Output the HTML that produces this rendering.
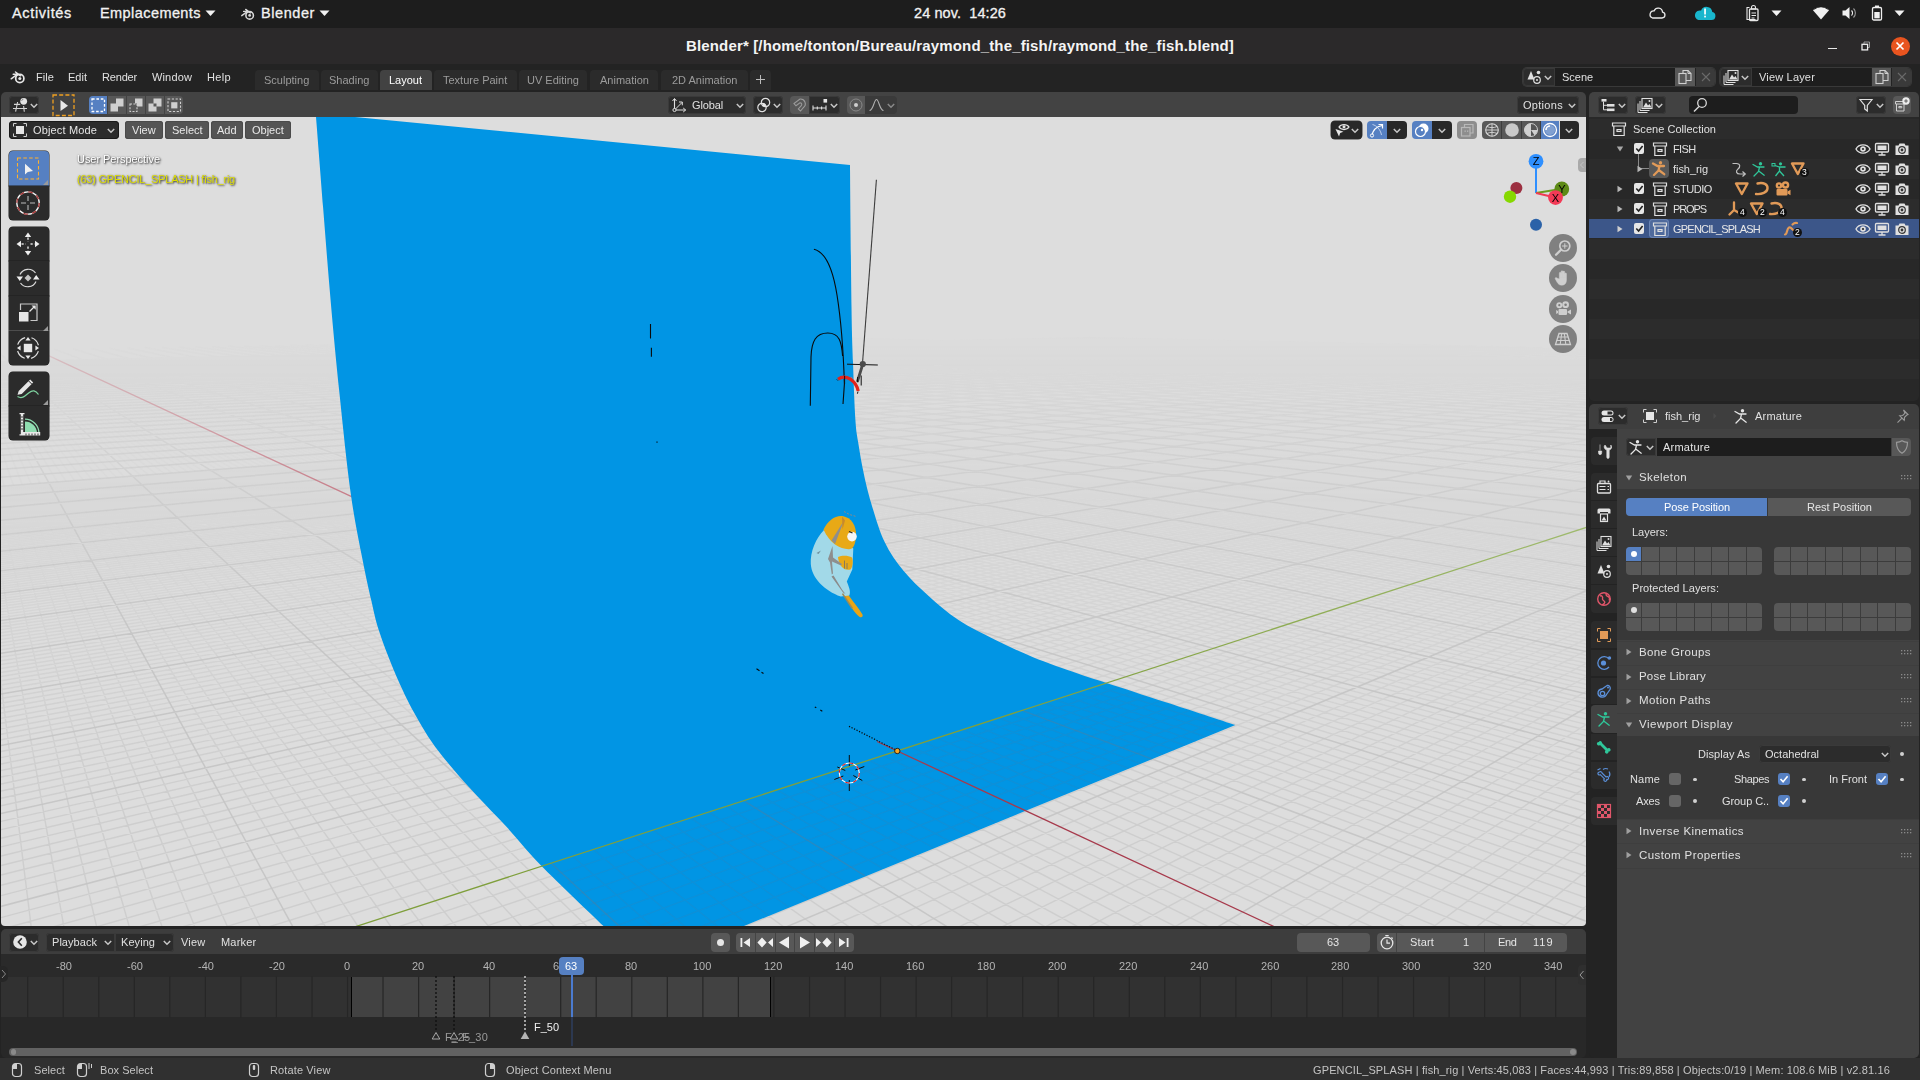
<!DOCTYPE html><html><head><meta charset="utf-8"><title>Blender</title><style>html,body{margin:0;padding:0;background:#232323;}
body{width:1920px;height:1080px;position:relative;overflow:hidden;font-family:"Liberation Sans",sans-serif;}
div,svg,span.t{position:absolute;}
span.t{white-space:nowrap;will-change:transform;}
span.l{will-change:auto;}
svg.g{will-change:transform;}
</style></head><body><div style="left:0px;top:0px;width:1920px;height:1080px;background:#232323;"></div>
<div style="left:0px;top:0px;width:1920px;height:28px;background:#1d1d1d;"></div>
<span class="t l" style="letter-spacing:0.667px;left:12.00px;top:5.73px;font-size:14.5px;line-height:14.5px;color:#f2f2f2;-webkit-text-stroke:0.3px #f2f2f2;">Activités</span>
<span class="t l" style="letter-spacing:0.424px;left:100.00px;top:5.73px;font-size:14.5px;line-height:14.5px;color:#f2f2f2;-webkit-text-stroke:0.3px #f2f2f2;">Emplacements</span>
<svg style="left:205px;top:10px;" width="12" height="7" viewBox="0 0 12 7"><path d="M0.5 0.5h10l-5 5.5z" fill="#f2f2f2"/></svg>
<span class="t l" style="letter-spacing:0.574px;left:261.00px;top:5.73px;font-size:14.5px;line-height:14.5px;color:#f2f2f2;-webkit-text-stroke:0.3px #f2f2f2;">Blender</span>
<svg style="left:319px;top:10px;" width="12" height="7" viewBox="0 0 12 7"><path d="M0.5 0.5h10l-5 5.5z" fill="#f2f2f2"/></svg>
<span class="t l" style="letter-spacing:0.083px;left:914.00px;top:5.73px;font-size:14.5px;line-height:14.5px;color:#f2f2f2;-webkit-text-stroke:0.3px #f2f2f2;">24 nov.&nbsp; 14:26</span>
<div style="left:0px;top:28px;width:1920px;height:36px;background:#2b292a;"></div>
<span class="t l" style="letter-spacing:0.149px;left:686.00px;top:38.30px;font-size:15px;line-height:15px;color:#f4f4f4;font-weight:700;">Blender* [/home/tonton/Bureau/raymond_the_fish/raymond_the_fish.blend]</span>
<div style="left:1827.5px;top:48px;width:9px;height:1.2px;background:#e8e8e8;"></div>
<svg style="left:1859px;top:40px;" width="14" height="14" viewBox="0 0 14 14"><path d="M5 4v-2h5.500v5.500h-2" fill="none" stroke="#999" stroke-width="1"/><rect x="3" y="4.300" width="5.600" height="5.600" fill="none" stroke="#eee" stroke-width="1.300"/></svg>
<div style="left:1890.5px;top:36.5px;width:19px;height:19px;background:#e9541f;border-radius:10px;"></div>
<svg style="left:1894px;top:40px;" width="12" height="12" viewBox="0 0 12 12"><path d="M2.5 2.5l7 7M9.5 2.5l-7 7" stroke="#fff" stroke-width="1.7" fill="none"/></svg>
<div style="left:0px;top:64px;width:1920px;height:28px;background:#232323;"></div>
<span class="t" style="letter-spacing:0.066px;left:36.00px;top:71.69px;font-size:11px;line-height:11px;color:#e0e0e0;">File</span>
<span class="t" style="letter-spacing:0.008px;left:68.00px;top:71.69px;font-size:11px;line-height:11px;color:#e0e0e0;">Edit</span>
<span class="t" style="letter-spacing:-0.180px;left:102.00px;top:71.69px;font-size:11px;line-height:11px;color:#e0e0e0;">Render</span>
<span class="t" style="letter-spacing:0.146px;left:152.00px;top:71.69px;font-size:11px;line-height:11px;color:#e0e0e0;">Window</span>
<span class="t" style="letter-spacing:0.344px;left:207.00px;top:71.69px;font-size:11px;line-height:11px;color:#e0e0e0;">Help</span>
<div style="left:255px;top:70px;width:64px;height:20px;background:#2b2b2b;border-radius:4px 4px 0 0;"></div>
<span class="t" style="left:264.37px;top:74.69px;font-size:11px;line-height:11px;color:#9c9c9c;">Sculpting</span>
<div style="left:321px;top:70px;width:57px;height:20px;background:#2b2b2b;border-radius:4px 4px 0 0;"></div>
<span class="t" style="left:329.31px;top:74.69px;font-size:11px;line-height:11px;color:#9c9c9c;">Shading</span>
<div style="left:380px;top:70px;width:52px;height:20px;background:#424242;border-radius:4px 4px 0 0;"></div>
<span class="t" style="left:389.48px;top:74.69px;font-size:11px;line-height:11px;color:#ffffff;">Layout</span>
<div style="left:434px;top:70px;width:83px;height:20px;background:#2b2b2b;border-radius:4px 4px 0 0;"></div>
<span class="t" style="left:443.40px;top:74.69px;font-size:11px;line-height:11px;color:#9c9c9c;">Texture Paint</span>
<div style="left:519px;top:70px;width:68px;height:20px;background:#2b2b2b;border-radius:4px 4px 0 0;"></div>
<span class="t" style="left:527.01px;top:74.69px;font-size:11px;line-height:11px;color:#9c9c9c;">UV Editing</span>
<div style="left:590px;top:70px;width:68px;height:20px;background:#2b2b2b;border-radius:4px 4px 0 0;"></div>
<span class="t" style="left:599.54px;top:74.69px;font-size:11px;line-height:11px;color:#9c9c9c;">Animation</span>
<div style="left:661px;top:70px;width:87px;height:20px;background:#2b2b2b;border-radius:4px 4px 0 0;"></div>
<span class="t" style="left:671.78px;top:74.69px;font-size:11px;line-height:11px;color:#9c9c9c;">2D Animation</span>
<div style="left:750px;top:70px;width:21px;height:20px;background:#2b2b2b;border-radius:4px 4px 0 0;"></div>
<svg style="left:755px;top:74px;" width="11" height="11" viewBox="0 0 11 11"><path d="M5.5 1v9M1 5.5h9" stroke="#bbb" stroke-width="1"/></svg>
<div style="left:1523px;top:68px;width:32px;height:18px;background:#2c2c2c;border-radius:4px 0 0 4px;box-shadow:inset 0 0 0 1px #383838;"></div>
<div style="left:1555px;top:68px;width:120px;height:18px;background:#1e1e1e;"></div>
<div style="left:1675px;top:68px;width:20px;height:18px;background:#585858;"></div>
<div style="left:1696px;top:68px;width:19px;height:18px;background:#3a3a3a;border-radius:0 4px 4px 0;"></div>
<span class="t" style="left:1562.00px;top:71.69px;font-size:11px;line-height:11px;color:#e0e0e0;">Scene</span>
<div style="left:1523px;top:68px;width:192px;height:18px;background:transparent;border-radius:4px;box-shadow:0 0 0 1px #393939;"></div>
<div style="left:1720px;top:68px;width:191px;height:18px;background:transparent;border-radius:4px;box-shadow:0 0 0 1px #393939;"></div>
<div style="left:1720px;top:68px;width:32px;height:18px;background:#2c2c2c;border-radius:4px 0 0 4px;box-shadow:inset 0 0 0 1px #383838;"></div>
<div style="left:1752px;top:68px;width:119px;height:18px;background:#1e1e1e;"></div>
<div style="left:1872px;top:68px;width:19px;height:18px;background:#585858;"></div>
<div style="left:1892px;top:68px;width:19px;height:18px;background:#3a3a3a;border-radius:0 4px 4px 0;"></div>
<span class="t" style="letter-spacing:0.178px;left:1759.00px;top:71.69px;font-size:11px;line-height:11px;color:#e0e0e0;">View Layer</span>
<svg style="left:10px;top:69px;" width="16" height="16" viewBox="0 0 16 16"><path d="M1.200 9.800l6.300-4.600h-4.300M5.500 3l5 3.800" stroke="#e6e6e6" stroke-width="1.500" fill="none" stroke-linecap="round" stroke-linejoin="round"/><circle cx="9.800" cy="9.500" r="4.100" fill="none" stroke="#e6e6e6" stroke-width="1.700"/><circle cx="9.800" cy="9.500" r="1.500" fill="#e6e6e6"/></svg>
<svg style="left:240px;top:6px;transform:scale(0.920);" width="16" height="16" viewBox="0 0 16 16"><path d="M1.200 9.800l6.300-4.600h-4.300M5.500 3l5 3.800" stroke="#d8d8d8" stroke-width="1.500" fill="none" stroke-linecap="round" stroke-linejoin="round"/><circle cx="9.800" cy="9.500" r="4.100" fill="none" stroke="#d8d8d8" stroke-width="1.700"/><circle cx="9.800" cy="9.500" r="1.500" fill="#d8d8d8"/></svg>
<svg style="left:1647px;top:4px;" width="20" height="18" viewBox="0 0 20 18"><path d="M5.500 14h9.500a3 3 0 0 0 .500-5.950 4.300 4.300 0 0 0-8.300-1.200 3.700 3.700 0 0 0-1.700 7.150z" fill="none" stroke="#e8e8e8" stroke-width="1.300"/></svg>
<svg style="left:1693px;top:4px;" width="24" height="18" viewBox="0 0 24 18"><path d="M5.500 16h13a4 4 0 0 0 .800-7.900 5.800 5.800 0 0 0-11.200-1.500 4.800 4.800 0 0 0-2.600 9.400z" fill="#19b6cd"/><rect x="11.200" y="4.500" width="1.700" height="6" fill="#fff"/><rect x="11.200" y="11.700" width="1.700" height="1.700" fill="#fff"/></svg>
<svg style="left:1745px;top:4px;" width="16" height="18" viewBox="0 0 16 18"><path d="M4.500 3.500h-2.500v12h8.500" fill="none" stroke="#e8e8e8" stroke-width="1.100"/><rect x="4.500" y="5" width="8.500" height="11.500" rx="1" fill="none" stroke="#e8e8e8" stroke-width="1.300"/><path d="M6.500 3.500a2 2 0 0 1 4 0v1.500h-4zM6.500 9h4.500M6.500 11.500h4.500M6.500 14h3" stroke="#e8e8e8" stroke-width="1.100" fill="none"/></svg>
<svg style="left:1770.5px;top:10px;" width="12" height="7" viewBox="0 0 12 7"><path d="M0.500 0.500h10l-5 5.500z" fill="#f2f2f2"/></svg>
<svg style="left:1812px;top:5px;" width="18" height="16" viewBox="0 0 18 16"><path d="M9 14.500l-8-9.300a11.300 11.300 0 0 1 16 0z" fill="#f0f0f0"/><path d="M2.300 4.300a10 10 0 0 1 13.400 0" stroke="#1d1d1d" stroke-width="0.900" fill="none"/></svg>
<svg style="left:1841px;top:5px;" width="18" height="16" viewBox="0 0 18 16"><path d="M1.500 5.500h3l4-3.500v12l-4-3.500h-3z" fill="#f0f0f0"/><path d="M10.500 5.500a3.500 3.500 0 0 1 0 5" stroke="#f0f0f0" stroke-width="1.100" fill="none"/><path d="M12.500 3.500a6.300 6.300 0 0 1 0 9" stroke="#9a9a9a" stroke-width="1.100" fill="none"/></svg>
<svg style="left:1871px;top:4px;" width="12" height="18" viewBox="0 0 12 18"><rect x="1.500" y="3.500" width="9" height="12.500" rx="1.300" fill="none" stroke="#f0f0f0" stroke-width="1.300"/><rect x="4" y="1.500" width="4" height="2" fill="#f0f0f0"/><rect x="3.300" y="8" width="5.400" height="6.300" fill="#f0f0f0"/></svg>
<svg style="left:1894px;top:10px;" width="12" height="7" viewBox="0 0 12 7"><path d="M0.500 0.500h10l-5 5.500z" fill="#f2f2f2"/></svg>
<svg style="left:1526px;top:69px;" width="16" height="16" viewBox="0 0 16 16"><path d="M5 2l3.500 8.500h-7z" fill="#e0e0e0"/><circle cx="12.500" cy="3.500" r="1.800" fill="#e0e0e0"/><circle cx="11" cy="11" r="3.300" fill="none" stroke="#e0e0e0" stroke-width="1.200"/><circle cx="11" cy="11" r="1" fill="#e0e0e0"/></svg>
<svg style="left:1544px;top:74.5px;" width="8" height="6" viewBox="0 0 8 6"><path d="M0.800 1l3.200 3.200L7.200 1" stroke="#c8c8c8" stroke-width="1.500" fill="none"/></svg>
<svg style="left:1723px;top:68.5px;" width="17" height="17" viewBox="0 0 17 17"><rect x="5" y="1.500" width="10" height="10" fill="none" stroke="#e0e0e0" stroke-width="1.100"/><path d="M6 10.500l3-5 2 3 1.500-1.500 2 3.500z" fill="#e0e0e0"/><circle cx="12.500" cy="4" r="1" fill="#e0e0e0"/><path d="M3 4v9.500h9.500M1 6.500v9h9.500" stroke="#e0e0e0" stroke-width="1" fill="none"/></svg>
<svg style="left:1741px;top:74.5px;" width="8" height="6" viewBox="0 0 8 6"><path d="M0.800 1l3.200 3.200L7.200 1" stroke="#c8c8c8" stroke-width="1.500" fill="none"/></svg>
<svg style="left:1677px;top:69px;" width="16" height="16" viewBox="0 0 16 16"><path d="M6 4.500v-3h5l3 3v7h-5" fill="none" stroke="#d0d0d0" stroke-width="1.100"/><path d="M11 1.500v3h3" fill="none" stroke="#d0d0d0" stroke-width="1"/><rect x="2" y="4.500" width="7" height="10" fill="none" stroke="#d0d0d0" stroke-width="1.100"/></svg>
<svg style="left:1697.5px;top:69px;" width="16" height="16" viewBox="0 0 16 16"><path d="M4 4l8 8M12 4l-8 8" stroke="#6a6a6a" stroke-width="1.100"/></svg>
<svg style="left:1873.5px;top:69px;" width="16" height="16" viewBox="0 0 16 16"><path d="M6 4.500v-3h5l3 3v7h-5" fill="none" stroke="#d0d0d0" stroke-width="1.100"/><path d="M11 1.500v3h3" fill="none" stroke="#d0d0d0" stroke-width="1"/><rect x="2" y="4.500" width="7" height="10" fill="none" stroke="#d0d0d0" stroke-width="1.100"/></svg>
<svg style="left:1893.5px;top:69px;" width="16" height="16" viewBox="0 0 16 16"><path d="M4 4l8 8M12 4l-8 8" stroke="#6a6a6a" stroke-width="1.100"/></svg>
<svg style="left:1px;top:117px" width="1585" height="809" viewBox="0 0 1585 809"><defs>
<linearGradient id="fade" x1="0" y1="0" x2="0" y2="1">
<stop offset="0" stop-color="#000"/><stop offset="0.262" stop-color="#000"/><stop offset="0.33" stop-color="#2c2c2c"/><stop offset="0.40" stop-color="#666"/><stop offset="0.5" stop-color="#aaa"/><stop offset="0.66" stop-color="#fff"/><stop offset="1" stop-color="#fff"/></linearGradient>
<linearGradient id="fade2" x1="0" y1="0" x2="0" y2="1">
<stop offset="0" stop-color="#000"/><stop offset="0.35" stop-color="#000"/><stop offset="0.845" stop-color="#fff"/><stop offset="1" stop-color="#fff"/></linearGradient>
<mask id="gm" maskUnits="userSpaceOnUse" x="0" y="0" width="1585" height="809"><rect width="1585" height="809" fill="url(#fade)"/></mask>
<mask id="gm2" maskUnits="userSpaceOnUse" x="0" y="0" width="1585" height="809"><rect width="1585" height="809" fill="url(#fade2)"/></mask>
<clipPath id="vp"><path d="M0 0h1585v805q0 4 -4 4h-1577q-4 0 -4 -4z"/></clipPath>
</defs><g clip-path="url(#vp)"><rect width="1585" height="809" fill="#dddddd"/><g mask="url(#gm2)"><path d="M-43204.4 3736.7L1737.2 234.9M-269.3 237.5L5511.7 -863.6M-48444.4 4166.7L1739.3 234.9M-266.8 237.5L5593.8 -890.3M-55132.6 4715.5L1741.5 235.0M-264.3 237.4L5680.1 -918.3M-63965.8 5440.4L1743.7 235.0M-261.9 237.4L5771.0 -947.8M-76172.7 6442.1L1745.9 235.1M-259.4 237.4L5866.8 -978.9M-94142.5 7916.8L1748.1 235.1M-256.9 237.3L5968.1 -1011.7M-123217.3 10302.7L1750.3 235.2M-254.5 237.3L6075.1 -1046.4M-22168.1 2173.3L1752.5 235.2M-252.0 237.2L6188.5 -1083.2M-23592.1 2300.6L1754.7 235.3M-249.6 237.2L6308.8 -1122.3M-27071.1 2611.7L1759.2 235.4M-244.7 237.1L6572.9 -1208.0M-29227.0 2804.5L1761.4 235.4M-242.3 237.1L6718.2 -1255.1M-31756.6 3030.7L1763.6 235.5M-239.8 237.0L6873.7 -1305.6M-34766.3 3299.8L1765.9 235.5M-237.4 237.0L7040.4 -1359.6M-38407.3 3625.4L1768.1 235.6M-235.0 237.0L7219.5 -1417.8M-42901.5 4027.3L1770.4 235.6M-232.6 236.9L7412.6 -1480.4M-48588.3 4535.9L1772.6 235.7M-230.2 236.9L7621.3 -1548.1M-56015.3 5200.0L1774.9 235.7M-227.8 236.8L7847.5 -1621.5M-66125.6 6104.1L1777.2 235.8M-225.4 236.8L8093.7 -1701.4M-103502.2 9446.5L1781.7 235.9M-220.6 236.7L8657.1 -1884.2M-21220.7 2260.9L1784.0 235.9M-218.2 236.7L8981.7 -1989.5M-22648.1 2400.2L1786.3 236.0M-215.8 236.6L9340.9 -2106.1M-24281.8 2559.5L1788.6 236.0M-213.4 236.6L9740.5 -2235.7M-26170.2 2743.8L1790.9 236.1M-211.1 236.5L10187.9 -2380.9M-28377.6 2959.2L1793.2 236.1M-208.7 236.5L10692.1 -2544.5M-30992.6 3214.3L1795.5 236.2M-206.3 236.5L11264.7 -2730.3M-34139.3 3521.3L1797.9 236.2M-204.0 236.4L11920.6 -2943.1M-37998.5 3897.8L1800.2 236.3M-201.6 236.4L12679.4 -3189.3M-49104.7 4981.4L1804.9 236.4M-196.9 236.3L14620.9 -3819.3M-57513.2 5801.7L1807.2 236.4M-194.6 236.3L15890.4 -4231.2M-69400.2 6961.5L1809.6 236.5M-192.3 236.2L17450.3 -4737.3M-87487.4 8726.1L1811.9 236.6M-189.9 236.2L19412.9 -5374.1M-20234.3 2346.8L1814.3 236.6M-187.6 236.2L21957.5 -6199.8M-21655.9 2498.3L1816.6 236.7M-185.3 236.1L25388.0 -7312.8M-23292.7 2672.8L1819.0 236.7M-183.0 236.1L30264.2 -8895.0M-25197.8 2875.9L1821.4 236.8M-180.6 236.0L37744.5 -11322.1M-27443.1 3115.2L1823.8 236.8M-178.3 236.0L50674.5 -15517.5M-33397.6 3749.9L1828.6 236.9M-173.7 235.9L180638.8 -57686.6M-37463.9 4183.3L1831.0 237.0M-171.4 235.9L-519511.4 169489.1M-42659.3 4737.0L1833.4 237.0M-169.1 235.8L-103695.8 34570.6M-49530.1 5469.4L1835.8 237.1M-166.9 235.8L-56709.2 19325.0M-59042.4 6483.3L1838.2 237.1M-164.6 235.8L-38594.9 13447.5M-73082.1 7979.7L1840.7 237.2M-162.3 235.7L-29272.1 10429.7M-95890.9 10410.8L1843.1 237.3M-160.0 235.7L-28415.2 10318.2M-20515.1 2582.1L1845.5 237.3M-157.8 235.6L-27341.1 10123.4M-22126.3 2769.9L1848.0 237.4M-155.5 235.6L-27077.7 10221.7M-26251.9 3251.1L1852.9 237.5M-151.0 235.5L-25742.0 10117.9M-28952.4 3566.0L1855.4 237.5M-148.7 235.5L-23932.1 9612.5M-32273.4 3953.3L1857.9 237.6M-146.5 235.5L-22865.4 9384.7M-36456.6 4441.1L1860.3 237.6M-144.2 235.4L-22495.7 9433.8M-41887.8 5074.5L1862.8 237.7M-142.0 235.4L-22910.3 9815.0M-49223.3 5929.9L1865.3 237.7M-139.7 235.3L-20823.9 9137.4M-59677.6 7149.1L1867.8 237.8M-137.5 235.3L-22556.8 10110.2M-75776.7 9026.5L1870.3 237.9M-135.3 235.3L-21159.5 9718.0M-19146.3 2636.1L1872.8 237.9M-133.1 235.2L-20132.2 9477.3M-22497.0 3064.3L1877.9 238.0M-128.6 235.2L-19019.8 9416.8M-24655.5 3340.2L1880.4 238.1M-126.4 235.1L-18921.6 9612.6M-27273.4 3674.7L1883.0 238.1M-124.2 235.1L-19171.6 9997.5M-30514.4 4088.9L1885.5 238.2M-122.0 235.0L-15205.0 8182.3M-34631.3 4615.1L1888.1 238.3M-119.8 235.0L-15551.4 8600.5M-40034.5 5305.6L1890.6 238.3M-117.6 235.0L-16254.3 9242.5M-47438.7 6251.9L1893.2 238.4M-115.4 234.9L-17480.1 10224.6M-58207.8 7628.2L1895.8 238.4M-113.2 234.9L-13758.1 8332.4M-75310.1 9813.9L1898.4 238.5M-111.0 234.9L-14947.9 9326.9M-20588.1 3077.4L1903.5 238.6M-106.7 234.8L-13133.7 8774.6M-22573.1 3356.0L1906.1 238.7M-104.5 234.8L-10581.6 7351.2M-24982.7 3694.1L1908.7 238.7M-102.4 234.7L-11808.0 8483.8M-27969.5 4113.2L1911.4 238.8M-100.2 234.7L-13930.7 10360.8M-31769.2 4646.4L1914.0 238.8M-98.0 234.6L-10844.8 8421.9M-36765.9 5347.5L1916.6 238.9M-95.9 234.6L-8747.4 7104.1M-43631.0 6310.8L1919.3 239.0M-93.7 234.6L-10178.9 8595.7M-53653.2 7717.1L1921.9 239.0M-91.6 234.5L-8153.0 7226.3M-69661.0 9963.3L1924.5 239.1M-89.4 234.5L-9792.0 9056.7M-20035.3 3280.9L1929.9 239.2M-85.2 234.4L-9719.1 9932.6M-22117.4 3602.4L1932.5 239.3M-83.0 234.4L-7514.9 8139.2M-24683.7 3998.5L1935.2 239.3M-80.9 234.4L-5996.3 6903.6M-27925.3 4499.0L1937.9 239.4M-78.8 234.3L-7525.3 9165.6M-32149.1 5151.0L1940.6 239.4M-76.7 234.3L-5842.5 7621.2M-37881.3 6036.0L1943.3 239.5M-74.5 234.2L-4654.1 6530.4M-46105.5 7305.6L1946.0 239.6M-72.4 234.2L-5873.6 8839.5M-58898.2 9280.5L1948.7 239.6M-70.3 234.2L-4517.5 7396.3M-17195.3 3114.6L1951.5 239.7M-68.2 234.1L-3549.5 6366.0M-20921.6 3748.9L1956.9 239.8M-64.0 234.1L-3385.2 7433.4M-23466.0 4182.1L1959.7 239.9M-61.9 234.0L-2575.6 6393.3M-26716.7 4735.5L1962.4 239.9M-59.8 234.0L-3303.0 9372.1M-31015.3 5467.3L1965.2 240.0M-57.8 234.0L-2329.0 7762.1M-36965.8 6480.3L1968.0 240.0M-55.7 233.9L-1645.7 6632.7M-45746.8 7975.3L1970.7 240.1M-53.6 233.9L-1139.9 5796.7M-60008.2 10403.2L1973.5 240.2M-51.5 233.9L-1225.5 8496.3M-17073.4 3400.1L1976.3 240.2M-49.5 233.8L-664.7 7156.5M-18922.9 3748.3L1979.1 240.3M-47.4 233.8L-259.8 6189.1M-24161.9 4734.4L1984.7 240.4M-43.3 233.7L516.2 8141.4M-28047.6 5465.8L1987.6 240.5M-41.2 233.7L785.7 6905.2M-33426.1 6478.2L1990.4 240.5M-39.2 233.6L982.7 6001.8M-41361.9 7972.0L1993.2 240.6M-37.1 233.6L2224.4 10050.5M-54247.8 10397.6L1996.1 240.7M-35.1 233.6L2228.9 8217.5M-16288.6 3585.6L1998.9 240.7M-33.0 233.5L2232.1 6959.4M-18166.8 3977.7L2001.8 240.8M-31.0 233.5L2234.4 6042.4M-20536.2 4472.3L2004.7 240.9M-28.9 233.5L2236.1 5344.3M-23618.4 5115.7L2007.6 240.9M-26.9 233.4L4219.1 8787.1M-33761.7 7233.1L2013.3 241.1M-22.9 233.4L3657.8 6339.3M-43004.2 9162.4L2016.2 241.1M-20.9 233.3L3482.2 5573.2M-14763.3 3613.7L2019.2 241.2M-18.8 233.3L7009.5 10143.3M-16480.9 4012.7L2022.1 241.3M-16.8 233.3L6117.4 8278.9M-18652.3 4517.1L2025.0 241.3M-14.8 233.2L5506.8 7003.0M-21484.9 5175.1L2027.9 241.4M-12.8 233.2L5062.7 6074.9M-25334.9 6069.4L2030.9 241.5M-10.8 233.2L4725.2 5369.5M-30870.2 7355.2L2033.8 241.5M-8.8 233.1L9739.5 10228.8M-39507.8 9361.6L2036.8 241.6M-6.8 233.1L8325.9 8335.3M-15793.0 4281.5L2042.7 241.7M-2.8 233.0L6660.7 6104.7M-18041.0 4864.9L2045.7 241.8M-0.9 233.0L6129.1 5392.6M-21037.7 5642.6L2048.7 241.9M1.1 233.0L5711.9 4833.6M-25232.0 6731.1L2051.7 241.9M3.1 232.9L11389.4 9028.9M-31520.8 8363.1L2054.7 242.0M5.1 232.9L9835.6 7527.3M-12538.6 3833.5L2057.8 242.1M7.0 232.9L8733.4 6462.0M-14102.0 4288.8L2060.8 242.1M9.0 232.8L7910.8 5666.9M-16112.6 4874.4L2063.8 242.2M11.0 232.8L7273.4 5050.9M-18794.6 5655.6L2066.9 242.3M12.9 232.8L6765.0 4559.6M-28191.0 8392.3L2073.0 242.4M16.8 232.7L11820.8 7314.0M-11678.1 4017.7L2076.1 242.5M18.8 232.7L10464.8 6305.5M-13217.3 4523.5L2079.2 242.5M20.7 232.6L9445.4 5547.3M-15225.9 5183.6L2082.3 242.6M22.7 232.6L8651.0 4956.4M-17957.5 6081.3L2085.4 242.7M24.6 232.6L8014.6 4483.1M-21887.7 7372.9L2088.5 242.7M26.6 232.5L17335.1 9187.0M-28027.6 9390.7L2091.6 242.8M28.5 232.5L14732.7 7635.8M-11379.6 4424.4L2094.7 242.9M30.4 232.5L12896.0 6541.1M-13062.6 5052.5L2097.9 242.9M32.3 232.4L11530.5 5727.2M-18561.3 7104.5L2104.2 243.1M36.2 232.4L9635.7 4597.8M-23519.3 8954.7L2107.3 243.2M38.1 232.3L8951.6 4190.0M-10194.2 4528.3L2110.5 243.2M40.0 232.3L19592.7 8713.6M-11743.7 5189.9L2113.7 243.3M41.9 232.3L16732.4 7308.7M-13851.8 6090.1L2116.9 243.4M43.8 232.2L14682.0 6301.6M-16886.6 7386.0L2120.1 243.4M45.7 232.2L13140.1 5544.3M-21631.7 9412.1L2123.3 243.5M47.6 232.2L11938.4 4954.1M-9486.1 4850.4L2126.5 243.6M49.5 232.1L10975.6 4481.2M-11052.5 5622.9L2129.7 243.7M51.4 232.1L10186.8 4093.8M-16519.3 8318.8L2136.2 243.8M55.2 232.1L20183.3 7602.2M-7941.5 4744.1L2139.5 243.9M57.1 232.0L17554.9 6516.6M-9216.9 5478.9L2142.8 244.0M59.0 232.0L15598.5 5708.5M-10983.6 6496.8L2146.1 244.0M60.8 232.0L14085.5 5083.7M-13593.5 8000.5L2149.3 244.1M62.7 231.9L12880.6 4586.0M-6825.6 4826.1L2152.6 244.2M64.6 231.9L11898.3 4180.3M-7943.6 5589.8L2156.0 244.2M66.4 231.9L11082.2 3843.2M-9503.3 6655.3L2159.3 244.3M68.3 231.8L26524.9 8756.6M-11830.7 8245.0L2162.6 244.4M70.2 231.8L22504.4 7338.7M-7040.0 5969.2L2169.3 244.5M73.9 231.7L17464.6 5561.2M-8539.2 7206.9L2172.7 244.6M75.7 231.7L15781.1 4967.5M-10856.4 9120.0L2176.0 244.7M77.6 231.7L14433.0 4492.0M-5355.5 5633.7L2179.4 244.8M79.4 231.6L13329.2 4102.7M-6414.3 6718.2L2182.8 244.8M81.3 231.6L12408.8 3778.1M-8000.6 8343.1L2186.2 244.9M83.1 231.6L32572.3 9437.5M-4089.6 5531.6L2189.6 245.0M84.9 231.6L27221.4 7806.6M-4877.9 6571.9L2193.0 245.1M86.8 231.5L23475.6 6664.9M-6047.9 8116.1L2196.5 245.2M88.6 231.5L20707.0 5821.0M-3654.2 6702.6L2203.4 245.3M92.2 231.4L16888.2 4657.0M-4550.3 8318.7L2206.8 245.4M94.1 231.4L15515.8 4238.7M-2135.6 5913.0L2210.3 245.5M95.9 231.4L14378.7 3892.1M-2578.2 7124.2L2213.8 245.5M97.7 231.3L13421.1 3600.3M-3258.8 8986.4L2217.3 245.6M99.5 231.3L37008.3 9440.1M-1233.1 6453.8L2220.8 245.7M101.3 231.3L30873.2 7808.3M-1513.9 7934.7L2224.3 245.8M103.1 231.2L26578.9 6666.1M-1968.9 10333.4L2227.8 245.9M104.9 231.2L23405.0 5821.9M-233.9 7373.8L2231.4 245.9M106.7 231.2L20963.6 5172.6M825.5 7119.9L2238.5 246.1M110.3 231.1L17454.3 4239.2M1059.6 8979.5L2242.1 246.2M112.1 231.1L16150.9 3892.5M1798.7 7097.4L2245.7 246.3M113.9 231.1L15053.3 3600.6M2292.0 8943.3L2249.3 246.3M115.7 231.0L14116.3 3351.4M2781.3 7285.4L2252.9 246.4M117.4 231.0L39223.7 8844.6M3563.7 9247.6L2256.5 246.5M119.2 231.0L33047.7 7399.8M3866.2 7703.5L2260.1 246.6M121.0 230.9L28639.6 6368.6M5031.7 9940.3L2263.8 246.7M122.8 230.9L25335.3 5595.7M5174.2 8418.7L2267.4 246.7M124.5 230.9L22766.4 4994.7M6904.3 9580.4L2274.7 246.9M128.1 230.8L19031.5 4121.0M7013.2 8609.7L2278.4 247.0M129.8 230.8L17631.4 3793.5M7215.2 7999.5L2282.1 247.1M131.6 230.8L16447.0 3516.4M7496.5 7622.6L2285.8 247.2M133.3 230.7L15431.9 3278.9M9712.2 9804.6L2289.6 247.2M135.1 230.7L47727.8 9613.9M10092.0 9456.9L2293.3 247.3M136.8 230.7L39576.8 7925.8M10626.0 9330.6L2297.1 247.4M138.6 230.6L33903.5 6750.8M11329.2 9393.7L2300.8 247.5M140.3 230.6L29727.2 5885.9M12235.4 9640.4L2304.6 247.6M142.1 230.6L26524.4 5222.6M12501.2 8755.7L2312.2 247.7M145.5 230.5L21935.3 4272.1M14098.6 9541.9L2316.0 247.8M147.3 230.5L20235.2 3920.0M14021.0 8993.9L2319.8 247.9M149.0 230.5L18805.4 3623.9M16362.5 10218.4L2323.6 248.0M150.7 230.4L17586.2 3371.4M17158.4 10281.1L2327.5 248.1M152.4 230.4L16534.2 3153.5M16844.2 9621.1L2331.3 248.2M154.2 230.4L55555.1 10023.0M17562.9 9656.6L2335.2 248.3M155.9 230.4L45663.3 8199.3M19239.5 10256.3L2339.1 248.3M157.6 230.3L38868.0 6946.4M19982.0 10277.2L2343.0 248.4M159.3 230.3L33912.0 6032.7M21556.8 10361.5L2350.8 248.6M162.7 230.2L27167.2 4789.2M27863.8 13201.9L2354.7 248.7M164.4 230.2L24768.7 4346.9M46286.2 21787.4L2358.7 248.8M166.1 230.2L22791.3 3982.4M136253.6 63715.3L2362.6 248.9M167.8 230.2L21133.2 3676.7M-144769.8 -67251.2L2366.6 249.0M169.5 230.1L19722.8 3416.6M-47313.4 -21833.3L2370.6 249.0M171.2 230.1L18508.4 3192.7M-28292.4 -12968.8L2374.6 249.1M172.9 230.1L17451.8 2997.9M-20187.3 -9191.5L2378.6 249.2M174.6 230.0L62298.3 10097.4M-15696.5 -7098.7L2382.6 249.3M176.3 230.0L51086.5 8248.5M-10869.8 -4849.3L2390.7 249.5M179.6 230.0L37808.1 6058.9M-9423.8 -4175.4L2394.8 249.6M181.3 229.9L33552.5 5357.1M-8318.6 -3660.3L2398.9 249.7M183.0 229.9L30206.7 4805.4M-7446.4 -3253.8L2403.0 249.8M184.6 229.9L27507.0 4360.2M-6740.6 -2924.9L2407.1 249.9M186.3 229.8L25282.8 3993.4M-6157.7 -2653.3L2411.2 250.0M188.0 229.8L23418.6 3686.0M-5668.2 -2425.1L2415.3 250.1M189.6 229.8L21833.6 3424.6M-5251.2 -2230.8L2419.5 250.1M191.3 229.8L20469.3 3199.6M-4891.9 -2063.3L2423.7 250.2M193.0 229.7L19282.8 3004.0M-4304.0 -1789.4L2432.0 250.4M196.3 229.7L68186.8 9959.9M-4060.5 -1675.9L2436.2 250.5M197.9 229.6L56015.0 8157.4M-3843.3 -1574.7L2440.5 250.6M199.6 229.6L47636.6 6916.6M-3648.4 -1483.8L2444.7 250.7M201.2 229.6L41517.4 6010.4M-3472.5 -1401.9L2448.9 250.8M202.8 229.6L36852.2 5319.5M-3313.1 -1327.6L2453.2 250.9M204.5 229.5L33177.7 4775.3M-3167.8 -1259.8L2457.5 251.0M206.1 229.5L30208.8 4335.6M-3034.8 -1197.9L2461.8 251.1M207.7 229.5L27759.9 3973.0M-2912.8 -1141.0L2466.1 251.2M209.4 229.4L25705.4 3668.7M-2696.3 -1040.1L2474.7 251.4M212.6 229.4L22451.5 3186.8M-2599.9 -995.2L2479.1 251.5M214.2 229.4L21141.1 2992.8M-2510.2 -953.4L2483.5 251.6M215.9 229.3L19990.3 2822.4M-2426.6 -914.5L2487.8 251.7M217.5 229.3L18971.7 2671.5M-2348.5 -878.1L2492.2 251.8M219.1 229.3L73994.6 9770.3M-2275.4 -844.0L2496.6 251.9M220.7 229.3L60961.1 8030.8M-2206.8 -812.0L2501.1 252.0M222.3 229.2L51935.0 6826.2M-2142.2 -781.9L2505.5 252.1M223.9 229.2L45314.4 5942.6M-2081.5 -753.6L2510.0 252.2M225.5 229.2L40250.7 5266.8M-1969.9 -701.6L2518.9 252.4M228.7 229.1L33015.5 4301.2M-1918.6 -677.7L2523.4 252.5M230.3 229.1L30341.2 3944.3M-1869.9 -655.0L2528.0 252.6M231.9 229.1L28094.7 3644.4M-1823.7 -633.5L2532.5 252.7M233.5 229.0L26180.9 3389.0M-1779.8 -613.0L2537.1 252.8M235.1 229.0L24530.9 3168.8M-1738.0 -593.5L2541.6 252.9M236.7 229.0L23093.8 2977.0M-1698.2 -575.0L2546.2 253.0M238.3 229.0L21830.9 2808.4M-1660.2 -557.3L2550.8 253.1M239.9 228.9L20712.2 2659.1M-1623.9 -540.4L2555.4 253.2M241.4 228.9L19714.5 2526.0M-1556.0 -508.7L2564.7 253.4M244.6 228.9L66726.3 7973.9M-1524.2 -493.9L2569.4 253.5M246.2 228.8L56874.9 6785.4M-1493.7 -479.7L2574.1 253.6M247.7 228.8L49634.8 5911.9M-1464.5 -466.1L2578.8 253.7M249.3 228.8L44089.4 5242.9M-1436.4 -453.0L2583.5 253.8M250.9 228.7L39705.9 4714.0M-1409.4 -440.4L2588.2 253.9M252.4 228.7L36153.8 4285.5M-1383.4 -428.3L2593.0 254.0M254.0 228.7L33217.0 3931.2M-1358.4 -416.6L2597.8 254.1M255.5 228.7L30748.5 3633.4M-1334.3 -405.4L2602.5 254.2M257.1 228.6L28644.4 3379.5M-1288.7 -384.1L2612.2 254.5M260.2 228.6L25248.4 2969.8M-1267.1 -374.1L2617.0 254.6M261.7 228.6L23858.3 2802.1M-1246.2 -364.3L2621.9 254.7M263.3 228.5L22626.7 2653.5M-1226.0 -354.9L2626.7 254.8M264.8 228.5L21527.8 2520.9M-1206.5 -345.8L2631.6 254.9M266.4 228.5L20541.5 2401.9M-1187.6 -337.0L2636.5 255.0M267.9 228.5L90703.6 9867.9M-1169.4 -328.5L2641.5 255.1M269.5 228.4L74500.9 8096.1M-1151.7 -320.3L2646.4 255.2M271.0 228.4L63315.1 6872.9M-1134.5 -312.3L2651.4 255.3M272.5 228.4L55128.5 5977.6" stroke="#cccccc" stroke-width="1.4" opacity="0.9" fill="none"/></g><g mask="url(#gm)"><path d="M-19545.2 677.4L1095.6 220.5M-2368.1 273.0L2514.0 109.0M-22918.3 760.9L1104.5 220.7M-2286.1 271.6L2519.3 107.3M-27702.6 879.2L1113.7 220.9M-2207.0 270.3L2525.0 105.5M-35017.6 1060.2L1122.9 221.1M-2130.6 269.0L2530.8 103.6M-47593.8 1371.4L1132.3 221.4M-2056.8 267.7L2536.9 101.6M-74294.3 2032.0L1141.9 221.6M-1985.4 266.5L2543.3 99.5M-169389.1 4384.7L1151.6 221.8M-1916.3 265.4L2549.9 97.4M-30453.5 1007.2L1161.5 222.0M-1849.5 264.2L2556.9 95.1M-40496.5 1275.4L1171.6 222.2M-1784.7 263.1L2564.2 92.7M-60445.1 1808.2L1181.8 222.5M-1722.0 262.1L2571.9 90.2M-119214.2 3377.9L1192.2 222.7M-1661.2 261.0L2579.9 87.6M-28559.3 1017.5L1202.8 222.9M-1602.2 260.0L2588.3 84.9M-38135.9 1293.7L1213.5 223.2M-1545.0 259.1L2597.2 82.0M-57398.5 1849.3L1224.5 223.4M-1489.5 258.1L2606.6 79.0M-116077.1 3541.9L1235.6 223.7M-1435.6 257.2L2616.5 75.8M-28802.7 1091.1L1246.9 223.9M-1383.2 256.3L2626.9 72.4M-39651.8 1429.1L1258.5 224.2M-1332.2 255.5L2638.0 68.8M-63646.8 2176.9L1270.2 224.4M-1282.7 254.6L2649.7 65.0M-161405.7 5223.1L1282.1 224.7M-1234.5 253.8L2662.2 60.9M-31721.9 1261.7L1294.3 225.0M-1187.6 253.0L2675.4 56.6M-47049.0 1777.9L1306.7 225.3M-1142.0 252.3L2689.6 52.1M-91114.8 3261.8L1319.3 225.5M-1097.6 251.5L2704.7 47.2M-27746.1 1203.5L1332.2 225.8M-1054.3 250.8L2720.8 41.9M-40092.4 1653.0L1345.3 226.1M-1012.1 250.1L2738.2 36.3M-72294.4 2825.5L1358.7 226.4M-971.0 249.4L2756.9 30.2M-26019.5 1217.8L1372.3 226.7M-930.9 248.7L2777.1 23.7M-37835.6 1683.2L1386.2 227.0M-891.8 248.0L2798.9 16.6M-69375.4 2925.2L1400.4 227.3M-853.6 247.4L2822.6 8.9M-26103.0 1305.4L1414.8 227.7M-816.4 246.8L2848.5 0.5M-39493.9 1876.1L1429.5 228.0M-780.0 246.2L2876.8 -8.7M-81198.5 3653.4L1444.6 228.3M-744.5 245.6L2907.9 -18.8M-28390.0 1502.8L1459.9 228.7M-709.9 245.0L2942.3 -30.0M-47269.9 2374.0L1475.6 229.0M-676.0 244.4L2980.5 -42.3M-141476.2 6720.7L1491.6 229.4M-642.8 243.8L3023.0 -56.2M-34896.6 1937.1L1507.9 229.8M-610.5 243.3L3070.9 -71.7M-74598.7 3921.6L1524.6 230.1M-578.8 242.8L3125.1 -89.3M-28959.4 1761.7L1541.7 230.5M-547.8 242.2L3186.9 -109.3M-55535.2 3201.7L1559.1 230.9M-517.5 241.7L3258.1 -132.4M-26010.6 1721.2L1576.9 231.3M-487.9 241.2L3340.9 -159.3M-48718.6 3055.9L1595.1 231.7M-458.9 240.7L3438.7 -191.0M-24993.1 1786.9L1613.7 232.1M-430.5 240.3L3555.6 -228.9M-48640.1 3295.7L1632.8 232.5M-402.6 239.8L3698.0 -275.2M-25792.1 1979.9L1652.3 233.0M-375.4 239.3L3875.3 -332.7M-56709.5 4123.3L1672.2 233.4M-348.7 238.9L4101.9 -406.2M-29245.1 2396.3L1692.6 233.9M-322.5 238.4L4402.0 -503.6M-89319.1 6925.2L1713.6 234.4M-296.9 238.0L4818.1 -638.6M-38988.2 3390.7L1735.0 234.8M-271.8 237.6L5433.5 -838.3M-25211.9 2445.4L1756.9 235.3M-247.1 237.2L6436.7 -1163.8M-80693.8 7406.9L1779.4 235.8M-223.0 236.8L8362.4 -1788.6M-42842.8 4370.4L1802.5 236.3M-199.3 236.4L13567.5 -3477.5M-30128.6 3401.4L1826.2 236.9M-176.0 236.0L78422.1 -24520.7M-24012.8 2990.0L1850.5 237.4M-153.2 235.6L-26511.7 10209.4M-20686.5 2832.9L1875.4 238.0M-130.8 235.2L-19425.7 9376.6M-18924.6 2844.0L1900.9 238.5M-108.9 234.8L-11943.3 7731.4M-18312.1 3014.9L1927.2 239.1M-87.3 234.5L-7739.9 7546.4M-18875.9 3400.7L1954.2 239.7M-66.1 234.1L-4521.3 8893.0M-21223.2 4181.2L1981.9 240.4M-45.3 233.8L124.8 9935.9M-27792.1 5986.9L2010.4 241.0M-24.9 233.4L3891.8 7359.9M-14044.3 3827.7L2039.8 241.7M-4.8 233.1L7361.1 7042.9M-22551.4 6749.7L2069.9 242.3M14.9 232.7L13712.8 8721.1M-13242.1 6702.7L2133.0 243.7M53.3 232.1L23901.6 9137.9M-5990.7 5102.9L2165.9 244.5M72.0 231.8L19626.4 6323.7M-3055.5 5622.8L2199.9 245.2M90.4 231.5L18577.3 5171.9M-286.8 9392.2L2234.9 246.0M108.5 231.2L19027.4 4657.6M5354.8 7488.0L2271.1 246.8M126.3 230.9L20712.0 4514.1M13401.5 10087.0L2308.4 247.7M143.8 230.6L23990.3 4697.7M20689.0 10277.0L2346.9 248.5M161.0 230.3L30137.6 5336.8M-12843.2 -5768.9L2386.7 249.4M177.9 230.0L43402.7 6981.4M-4578.9 -1917.5L2427.8 250.3M194.6 229.7L18241.4 2832.2M-2800.3 -1088.6L2470.4 251.3M211.0 229.4L23957.2 3409.8M-2024.1 -726.9L2514.4 252.3M227.1 229.1L36252.5 4733.2M-1589.2 -524.2L2560.1 253.3M243.0 228.9L80912.7 9685.5M-1311.1 -394.6L2607.4 254.3M258.7 228.6L26829.7 3160.6M-1117.9 -304.5L2656.4 255.4M274.0 228.4L48877.4 5294.0M-975.9 -238.4L2707.2 256.6M289.2 228.1L23617.3 2531.7M-867.1 -187.7L2760.1 257.8M304.1 227.8L41140.5 4059.1M-781.1 -147.6L2815.0 259.0M318.8 227.6L22763.2 2233.2M-711.4 -115.1L2872.0 260.3M333.3 227.4L40199.1 3628.0M-653.8 -88.3L2931.4 261.6M347.6 227.1L23380.5 2106.6M-605.4 -65.7L2993.3 263.0M361.6 226.9L43846.1 3627.6M-564.1 -46.4L3057.8 264.4M375.5 226.6L25412.7 2106.4M-528.5 -29.8L3125.1 265.9M389.1 226.4L53960.4 4094.1M-497.4 -15.4L3195.4 267.5M402.6 226.2L29409.2 2242.9M-470.2 -2.7L3268.8 269.1M415.8 226.0L80974.3 5627.0M-446.0 8.6L3345.7 270.9M428.9 225.7L37093.4 2599.3M-424.4 18.6L3426.2 272.7M441.8 225.5L24622.6 1738.8M-405.1 27.7L3510.7 274.5M454.5 225.3L54411.2 3493.1M-387.6 35.8L3599.3 276.5M467.0 225.1L31808.9 2064.0M-371.7 43.2L3692.5 278.6M479.3 224.9L119443.6 6993.6M-357.3 49.9L3790.6 280.8M491.5 224.7L47741.0 2834.1M-344.1 56.1L3893.9 283.1M503.5 224.5L30472.9 1832.3M-331.9 61.7L4003.0 285.6M515.4 224.3L108784.6 5871.6M-320.7 67.0L4118.3 288.1M527.0 224.1L48248.1 2646.0M-310.4 71.8L4240.3 290.9M538.6 223.9L31580.9 1757.9M-300.8 76.3L4369.7 293.8M550.0 223.7L133878.0 6643.6M-291.9 80.4L4507.2 296.8M561.2 223.5L55005.9 2779.6M-283.6 84.3L4653.5 300.1M572.3 223.3L35238.6 1811.2M-275.8 87.9L4809.5 303.6M583.2 223.1L26246.9 1370.7M-268.5 91.3L4976.2 307.3M594.0 223.0L73367.1 3401.3M-261.7 94.5L5154.8 311.3M604.7 222.8L43043.1 2034.2M-255.2 97.5L5346.6 315.6M615.2 222.6L30848.5 1484.4M-249.2 100.3L5553.0 320.2M625.6 222.4L136891.0 5786.0M-243.5 103.0L5775.9 325.2M635.8 222.2L60886.1 2629.9M-238.1 105.5L6017.2 330.6M645.9 222.1L39728.9 1751.3M-232.9 107.9L6279.4 336.5M655.9 221.9L29791.2 1338.7M-228.1 110.1L6565.4 342.9M665.8 221.7L123593.5 4839.5M-223.5 112.3L6878.4 349.9M675.6 221.6L60678.7 2431.4M-219.1 114.3L7222.5 357.6M685.2 221.4L40728.1 1667.8M-214.9 116.3L7602.6 366.1M694.7 221.3L30933.8 1292.9M-211.0 118.1L8024.7 375.5M704.1 221.1L155604.1 5609.1M-207.2 119.9L8496.0 386.1M713.4 220.9L70250.1 2595.7M-203.6 121.6L9025.8 397.9M722.6 220.8L45935.3 1737.3M-200.1 123.2L9625.7 411.3M731.7 220.6L34428.9 1331.1M-196.8 124.7L10310.6 426.6M740.6 220.5L27720.1 1094.2M-193.6 126.2L11099.8 444.3M749.5 220.3L100038.4 3381.5M-190.6 127.6L12019.3 464.9M758.2 220.2L58490.7 2027.6M-187.7 129.0L13104.1 489.1M766.9 220.0L41720.4 1481.2M-184.9 130.3L14403.2 518.2M775.4 219.9L32654.2 1185.8M-182.2 131.5L15987.1 553.6M783.9 219.7L251008.5 7680.8M-179.6 132.7L17961.1 597.7M792.2 219.6L93187.4 2931.6" stroke="#c5c5c5" stroke-width="1.5" opacity="0.95" fill="none"/></g><defs><linearGradient id="rf" gradientUnits="userSpaceOnUse" x1="25" y1="0" x2="355" y2="0"><stop offset="0" stop-color="#d08a94" stop-opacity="0"/><stop offset="0.1" stop-color="#d08a94" stop-opacity="0.4"/><stop offset="1" stop-color="#c4717e" stop-opacity="0.9"/></linearGradient></defs><path d="M25 228.1L356 382.2" stroke="url(#rf)" stroke-width="1.3"/><path d="M315 0L354 0L849 48C849.2 71.7 850.0 157.2 850.5 190.0C851.0 222.8 851.4 226.2 852.0 245.0C852.6 263.8 853.5 289.4 854.4 303.0C855.3 316.6 856.0 317.8 857.4 326.7C858.8 335.6 860.6 346.4 862.7 356.3C864.8 366.2 866.7 374.5 870.1 385.9C873.5 397.3 878.0 413.1 883.4 424.5C888.8 435.9 895.3 445.0 902.7 454.1C910.1 463.2 918.8 471.1 927.9 479.2C937.0 487.4 946.6 495.8 957.5 503.0C968.4 510.2 980.7 516.0 993.0 522.2C1005.3 528.4 1017.7 534.3 1031.5 540.0C1045.3 545.7 1063.7 552.0 1076.0 556.3C1088.3 560.6 1090.8 561.2 1105.6 566.0C1120.4 570.8 1143.3 578.3 1164.8 585.3C1186.3 592.3 1222.8 604.3 1234.4 608.1L743 809L602.5 809C592.0 798.9 555.8 764.6 539.8 748.2C523.8 731.8 516.9 722.2 506.2 710.6C495.5 699.0 484.9 688.4 475.7 678.5C466.5 668.6 458.8 660.2 451.2 651.0C443.6 641.8 436.9 634.2 429.8 623.5C422.7 612.8 414.8 599.1 408.4 586.9C402.0 574.7 396.7 562.4 391.6 550.2C386.5 538.0 381.5 524.8 377.9 513.6C374.3 502.4 372.9 494.9 370.2 483.0C367.5 471.1 364.9 460.0 361.5 442.4C358.1 424.8 353.8 405.4 349.9 377.6C346.0 349.8 341.8 308.2 338.4 275.8C335.0 243.4 332.3 214.1 329.6 183.2C326.9 152.3 324.5 121.1 322.1 90.6C319.7 60.1 316.2 15.1 315.0 0.0Z" fill="#0195e4"/><path d="M571.6 739.2L679.0 833.8M592.5 732.5L701.9 824.5M612.9 725.8L724.2 815.5M632.8 719.4L745.8 806.7M652.2 713.1L766.8 798.1M671.2 706.9L787.2 789.8M689.7 700.9L807.1 781.7M707.8 695.1L826.5 773.8M725.4 689.3L845.3 766.2M759.6 678.3L881.5 751.4M776.1 672.9L898.9 744.3M792.2 667.7L915.9 737.4M808.0 662.6L932.5 730.7M823.5 657.5L948.6 724.1M838.6 652.6L964.4 717.7M853.4 647.8L979.8 711.5M867.9 643.1L994.8 705.3M882.1 638.5L1009.4 699.4M556.0 757.1L1117.7 570.6M909.6 629.6L1037.8 687.8M566.6 766.9L1131.2 575.0M923.0 625.2L1051.5 682.3M577.5 777.1L1145.1 579.4M936.1 621.0L1064.8 676.8M588.7 787.7L1159.2 584.0M948.9 616.8L1077.9 671.5M600.5 798.6L1173.7 588.7M961.5 612.7L1090.7 666.3M612.6 809.9L1188.6 593.5M973.9 608.7L1103.2 661.2M625.2 821.7L1203.8 598.4M986.0 604.8L1115.5 656.2M638.3 834.0L1219.4 603.4M997.9 600.9L1127.5 651.3M1009.5 597.2L1139.2 646.6M1032.2 589.8L1162.0 637.3M1043.3 586.2L1173.0 632.8M1054.1 582.7L1183.8 628.4M1064.7 579.2L1194.4 624.1M1075.2 575.9L1204.8 619.9M1085.5 572.5L1215.0 615.7M1095.6 569.2L1225.0 611.7" stroke="#2f84be" stroke-width="1.3" opacity="0.3" fill="none"/><path d="M550.2 746.2L655.4 843.4M742.7 683.7L863.7 758.7M1021.0 593.4L1150.7 641.9" stroke="#4a7fa6" stroke-width="1.5" opacity="0.5" fill="none"/><defs><linearGradient id="gf" gradientUnits="userSpaceOnUse" x1="1000" y1="0" x2="1586" y2="0"><stop offset="0" stop-color="#7f9f3c"/><stop offset="1" stop-color="#9fba6e"/></linearGradient></defs><path d="M242.5 846.0L1982.2 281.6" stroke="url(#gf)" stroke-width="1.3"/><path d="M876 624.5L1730.4 1022.8" stroke="#a73a4c" stroke-width="1.25"/></g><path d="M875.4 62.7L861.6 245.0" stroke="#3c3c3c" stroke-width="1.1"/><path d="M812.9 132.2C825.0 135.0 832.0 153.0 836.0 178.0S842.5 238.0 843.4 267.0L842.0 287.0" stroke="#0a0a0a" stroke-width="1.1" fill="none"/><path d="M809.3 288.8L810.0 240.0C810.5 224.0 815.0 216.0 826.8 216.0S840.5 225.0 841.6 239.0" stroke="#0a0a0a" stroke-width="1.1" fill="none"/><path d="M649.5 206.9V221.60000000000002M650.4 230.8V239.7M656.0 324.5v1.2M755.5 551.7l3 2m2 1.5l2 1.3M813.8 590.0l1.5 .8m4 2.2l2 1.2" stroke="#0a0a0a" stroke-width="1.1" fill="none"/><path d="M846.0 247.2L876.8 248.0" stroke="#111" stroke-width="1"/><path d="M861.8 247.0L856.6 264.0" stroke="#4a4a4a" stroke-width="2.8" stroke-linecap="round"/><circle cx="861.8" cy="247" r="3.1" fill="#4a4a4a"/><path d="M850.0 260.0l2 5" stroke="#7a8a9a" stroke-width="2"/><path d="M837.0 262.2C845.0 256.5 855.0 264.0 857.2 274.0" stroke="#e0241c" stroke-width="3.2" fill="none"/><path d="M835.8 262.5l1 1M857.0 274.5l-.6 2.2M843.6 259.0v8M860.2 258.5v10M856.5 260.0v5" stroke="#111" stroke-width="1" fill="none"/><path d="M848.0 609.3L895.0 633.0" stroke="#0a0a0a" stroke-width="1.2" stroke-dasharray="1.2 1.6"/><path d="M848.3 638v11M848.3 663v11M833.3 662.5l9-3.5M854.3 653l9-3.5M836.3 650l8 3.500M852.3 658.5l9 5" stroke="#0a0a0a" stroke-width="1" fill="none"/><circle cx="848.3" cy="656" r="10" fill="none" stroke="#fff" stroke-width="1.100"/><circle cx="848.3" cy="656" r="10" fill="none" stroke="#e01818" stroke-width="1.100" stroke-dasharray="3.900 3.950"/><circle cx="896.3" cy="634" r="2.700" fill="#f5a623" stroke="#222" stroke-width="1"/><g transform="translate(-1 -117)"><path d="M842.5 592.500L848.500 595c4 6 10.500 13.500 14 19.500 0.800 2.500-1.200 3.600-3.200 2.200-5-4.500-10-12-13.500-18.500z" fill="#e8a516"/><path d="M824 530c-8 8-14 22-13.200 34 .800 14 14 27 30 32.500l8.500-1c2-4-1-10-2.500-14l5.500-12 1-21z" fill="#a2d9e8"/><path d="M823.500 529.500c4-9 12-14.500 19-13.500 9 1.500 14 10 13.500 19.500-.500 8-2 14-7.500 13.800-8.500-.500-19-6-25-19.800z" fill="#e8a916"/><path d="M838 557c4-1.800 10.500-1.500 14 .500 1.500 4 .500 9.500-1.500 12-4 1-7-.500-9-3-2-3-3.500-6.500-3.500-9.500z" fill="#e8a916"/><circle cx="852" cy="536.600" r="4.800" fill="#f6f6f6"/><path d="M849 531.500l3.500 1.500" stroke="#222" stroke-width="1.300"/><path d="M844 520.500l-12.500 20 3.500 3.500z" fill="#8e8e8e"/><path d="M842 516.500l3 4-2.500 9z" fill="#c98a2a"/><path d="M832.500 546l-4.500 13 2 3.500 1.800 12 1.200-1-1-12 9 4 1-1.500-9-6.500z" fill="#8e8e8e"/><path d="M831.500 576.500l11.500 16 2.500 1.500-3.500-4.500-8.500-14z" fill="#8a8a8a"/><path d="M843 593l10 15-1.500.800-9.500-14.500z" fill="#9b8a5a"/><path d="M816.500 553l4.500-2.500-2.500 3.500z" fill="#6f8f9c"/><path d="M844.500 560.500v8M847 563v6" stroke="#8a7a5a" stroke-width="1"/><path d="M844 511.500l5.500 3 6 1.800" stroke="#8a8a8a" stroke-width="1" stroke-dasharray="2 1.500" fill="none"/></g></svg>
<div style="left:1px;top:92px;width:1585px;height:25px;background:#434343;border-radius:5px 5px 0 0;"></div>
<div style="left:9px;top:96px;width:30px;height:18px;background:#2c2c2c;border-radius:4px;box-shadow:inset 0 0 0 1px #3a3a3a;"></div>
<svg style="left:12px;top:97px;" width="16" height="16" viewBox="0 0 16 16"><path d="M2 7.400h6.200M1 11.500h14M5.600 5l-2 9.700M11.600 9l.700 5.700" stroke="#d4d4d4" stroke-width="1.100" fill="none"/><circle cx="11.700" cy="4.300" r="3.400" fill="#e2e2e2"/><path d="M9.600 3.800a2.300 2.300 0 0 1 1.800-1.600" stroke="#555" stroke-width=".700" fill="none"/></svg>
<svg style="left:30px;top:103px;" width="8" height="6" viewBox="0 0 8 6"><path d="M0.8 1l3.2 3.2L7.2 1" stroke="#c8c8c8" stroke-width="1.5" fill="none"/></svg>
<svg style="left:52px;top:94px;" width="23" height="23" viewBox="0 0 23 23"><rect x="1" y="1" width="21" height="20.5" fill="none" stroke="#f0a020" stroke-width="1.3" stroke-dasharray="4 2.2"/><path d="M8.5 6v11l7.5-5.2z" fill="#e8e8e8"/></svg>
<div style="left:89px;top:96px;width:18.2px;height:18px;background:#5680c2;border-radius:4px 0 0 4px;"></div>
<div style="left:108px;top:96px;width:18.2px;height:18px;background:#585858;"></div>
<div style="left:127px;top:96px;width:18.2px;height:18px;background:#585858;"></div>
<div style="left:146px;top:96px;width:18.2px;height:18px;background:#585858;"></div>
<div style="left:165px;top:96px;width:18.2px;height:18px;background:#585858;border-radius:0 4px 4px 0;"></div>
<svg style="left:89px;top:96px;" width="18" height="18" viewBox="0 0 18 18"><rect x="3" y="3" width="12.5" height="12.5" fill="none" stroke="#fff" stroke-width="1.3" stroke-dasharray="2.6 1.8"/></svg>
<svg style="left:108px;top:96px;" width="18" height="18" viewBox="0 0 18 18"><path d="M8 2.5h7.5v8h-5.5v5h-7.5v-8h5.5z" fill="#cfcfcf"/></svg>
<svg style="left:127px;top:96px;" width="18" height="18" viewBox="0 0 18 18"><path d="M8 2.5h7.5v8h-5.5v-3h-2z" fill="#cfcfcf"/><rect x="3" y="8" width="7" height="7.5" fill="none" stroke="#cfcfcf" stroke-width="1.1" stroke-dasharray="2 1.4"/></svg>
<svg style="left:146px;top:96px;" width="18" height="18" viewBox="0 0 18 18"><path d="M7.5 2.5h8v8h-5v5h-8v-8h5z M7.5 7.5v3h3v-3z" fill="#cfcfcf" fill-rule="evenodd"/></svg>
<svg style="left:165px;top:96px;" width="18" height="18" viewBox="0 0 18 18"><rect x="3" y="3" width="12.5" height="12.5" fill="none" stroke="#cfcfcf" stroke-width="1.1" stroke-dasharray="2.2 1.6"/><rect x="6.2" y="6.2" width="6.2" height="6.2" fill="#cfcfcf"/></svg>
<div style="left:668px;top:96px;width:78px;height:18px;background:#2c2c2c;border-radius:4px;box-shadow:inset 0 0 0 1px #3a3a3a;"></div>
<svg style="left:671px;top:97px;" width="16" height="16" viewBox="0 0 16 16"><path d="M3.5 13V2M3.5 13h11" stroke="#e0e0e0" stroke-width="1.1" fill="none"/><path d="M1.5 4l2-2.5 2 2.5M12.2 11l2.5 2-2.5 2M3.5 13l7.5-7.5M8 5h3.3v3.3" stroke="#e0e0e0" stroke-width="1" fill="none"/><circle cx="3.5" cy="13" r="1.6" fill="#2c2c2c" stroke="#e0e0e0" stroke-width="1"/></svg>
<span class="t" style="letter-spacing:-0.133px;left:692.00px;top:99.69px;font-size:11px;line-height:11px;color:#e0e0e0;">Global</span>
<svg style="left:736px;top:103px;" width="8" height="6" viewBox="0 0 8 6"><path d="M0.8 1l3.2 3.2L7.2 1" stroke="#c8c8c8" stroke-width="1.5" fill="none"/></svg>
<div style="left:753px;top:96px;width:30px;height:18px;background:#2c2c2c;border-radius:4px;box-shadow:inset 0 0 0 1px #3a3a3a;"></div>
<svg style="left:756px;top:97px;" width="16" height="16" viewBox="0 0 16 16"><circle cx="9.5" cy="5.5" r="4.2" fill="none" stroke="#e0e0e0" stroke-width="1.2"/><circle cx="6" cy="10.5" r="4.2" fill="none" stroke="#e0e0e0" stroke-width="1.2"/><circle cx="8" cy="7.8" r="1.5" fill="#e6e6e6"/></svg>
<svg style="left:773px;top:103px;" width="8" height="6" viewBox="0 0 8 6"><path d="M0.8 1l3.2 3.2L7.2 1" stroke="#c8c8c8" stroke-width="1.5" fill="none"/></svg>
<div style="left:790px;top:96px;width:18.5px;height:18px;background:#585858;border-radius:4px 0 0 4px;"></div>
<svg style="left:791px;top:97px;" width="16" height="16" viewBox="0 0 16 16"><path d="M3 6.5l6-4.5a4.8 4.8 0 0 1 3.5 8.5l-3 3.5-2.2-2 3-3.3a1.8 1.8 0 0 0-1.4-3L5 8.8z" fill="none" stroke="#9a9a9a" stroke-width="1.1"/></svg>
<div style="left:808.5px;top:96px;width:31.5px;height:18px;background:#2c2c2c;border-radius:0 4px 4px 0;box-shadow:inset 0 0 0 1px #3a3a3a;"></div>
<svg style="left:811px;top:97px;" width="18" height="16" viewBox="0 0 18 16"><path d="M2 11h13M2 8.5v5M6.3 9.5v3M10.6 9.5v3M15 8.5v5" stroke="#e0e0e0" stroke-width="1.1" fill="none"/><rect x="12.5" y="2" width="3.6" height="3.6" fill="#e6e6e6"/></svg>
<svg style="left:830px;top:103px;" width="8" height="6" viewBox="0 0 8 6"><path d="M0.8 1l3.2 3.2L7.2 1" stroke="#c8c8c8" stroke-width="1.5" fill="none"/></svg>
<div style="left:847px;top:96px;width:18px;height:18px;background:#585858;border-radius:4px 0 0 4px;"></div>
<svg style="left:848px;top:97px;" width="16" height="16" viewBox="0 0 16 16"><circle cx="8" cy="8" r="6" fill="none" stroke="#888" stroke-width="1"/><circle cx="8" cy="8" r="2" fill="#cfcfcf"/></svg>
<div style="left:865px;top:96px;width:32px;height:18px;background:#3a3a3a;border-radius:0 4px 4px 0;"></div>
<svg style="left:868px;top:97px;" width="18" height="16" viewBox="0 0 18 16"><path d="M1.5 13.5c4 0 4.5-11 7-11s3 11 7 11" stroke="#b0b0b0" stroke-width="1.1" fill="none"/></svg>
<svg style="left:887px;top:103px;" width="8" height="6" viewBox="0 0 8 6"><path d="M0.8 1l3.2 3.2L7.2 1" stroke="#8a8a8a" stroke-width="1.5" fill="none"/></svg>
<div style="left:1517px;top:96px;width:62px;height:18px;background:#2c2c2c;border-radius:4px;box-shadow:inset 0 0 0 1px #3a3a3a;"></div>
<span class="t" style="letter-spacing:0.297px;left:1523.00px;top:99.69px;font-size:11px;line-height:11px;color:#e0e0e0;">Options</span>
<svg style="left:1568px;top:103px;" width="8" height="6" viewBox="0 0 8 6"><path d="M0.8 1l3.2 3.2L7.2 1" stroke="#c8c8c8" stroke-width="1.5" fill="none"/></svg>
<div style="left:9px;top:121px;width:109.5px;height:18px;background:#2c2c2c;border-radius:4px;box-shadow:inset 0 0 0 1px #1a1a1a;"></div>
<svg style="left:12px;top:122px;" width="16" height="16" viewBox="0 0 16 16"><rect x="4" y="4" width="8" height="8" fill="#e6e6e6"/><path d="M1.5 4.5v-3h3M11.5 1.5h3v3M14.5 11.5v3h-3M4.5 14.5h-3v-3" stroke="#d0d0d0" stroke-width="1" fill="none"/></svg>
<span class="t" style="letter-spacing:0.148px;left:33.00px;top:124.69px;font-size:11px;line-height:11px;color:#e6e6e6;">Object Mode</span>
<svg style="left:107px;top:128px;" width="8" height="6" viewBox="0 0 8 6"><path d="M0.8 1l3.2 3.2L7.2 1" stroke="#c8c8c8" stroke-width="1.5" fill="none"/></svg>
<div style="left:125px;top:121px;width:38px;height:18px;background:#545454;border-radius:3px;box-shadow:inset 0 0 0 1px #4a4a4a;"></div>
<span class="t" style="left:132.17px;top:124.69px;font-size:11px;line-height:11px;color:#e8e8e8;">View</span>
<div style="left:165.3px;top:121px;width:43.39999999999998px;height:18px;background:#545454;border-radius:3px;box-shadow:inset 0 0 0 1px #4a4a4a;"></div>
<span class="t" style="left:171.71px;top:124.69px;font-size:11px;line-height:11px;color:#e8e8e8;">Select</span>
<div style="left:211px;top:121px;width:32px;height:18px;background:#545454;border-radius:3px;box-shadow:inset 0 0 0 1px #4a4a4a;"></div>
<span class="t" style="left:217.21px;top:124.69px;font-size:11px;line-height:11px;color:#e8e8e8;">Add</span>
<div style="left:245.2px;top:121px;width:45.60000000000002px;height:18px;background:#545454;border-radius:3px;box-shadow:inset 0 0 0 1px #4a4a4a;"></div>
<span class="t" style="left:252.10px;top:124.69px;font-size:11px;line-height:11px;color:#e8e8e8;">Object</span>
<span class="t" style="letter-spacing:-0.048px;left:77.30px;top:153.69px;font-size:11px;line-height:11px;color:#ffffff;text-shadow:1px 1px 2px rgba(0,0,0,.85),0 0 2px rgba(0,0,0,.35);">User Perspective</span>
<span class="t" style="letter-spacing:-0.229px;left:77.30px;top:173.69px;font-size:11px;line-height:11px;color:#dede00;text-shadow:1px 1px 2px rgba(0,0,0,.8),0 0 2px rgba(0,0,0,.3);">(63) GPENCIL_SPLASH | fish_rig</span>
<div style="left:9px;top:151px;width:40px;height:34.5px;background:#5680c2;border-radius:4px 4px 0 0;box-shadow:0 0 0 0.5px #1e1e1e;"></div>
<div style="left:9px;top:186px;width:40px;height:34px;background:#2b2b2b;border-radius:0 0 4px 4px;box-shadow:0 0 0 0.5px #1e1e1e;"></div>
<div style="left:9px;top:226.5px;width:40px;height:34.3px;background:#2b2b2b;border-radius:4px 4px 0 0;box-shadow:0 0 0 0.5px #1e1e1e;"></div>
<div style="left:9px;top:261.3px;width:40px;height:34.3px;background:#2b2b2b;border-radius:0 0 0 0;box-shadow:0 0 0 0.5px #1e1e1e;"></div>
<div style="left:9px;top:296px;width:40px;height:34.3px;background:#2b2b2b;border-radius:0 0 0 0;box-shadow:0 0 0 0.5px #1e1e1e;"></div>
<div style="left:9px;top:330.8px;width:40px;height:34.3px;background:#2b2b2b;border-radius:0 0 4px 4px;box-shadow:0 0 0 0.5px #1e1e1e;"></div>
<div style="left:9px;top:371.5px;width:40px;height:34px;background:#2b2b2b;border-radius:4px 4px 0 0;box-shadow:0 0 0 0.5px #1e1e1e;"></div>
<div style="left:9px;top:406px;width:40px;height:34px;background:#2b2b2b;border-radius:0 0 4px 4px;box-shadow:0 0 0 0.5px #1e1e1e;"></div>
<svg style="left:14px;top:155px;" width="28" height="28" viewBox="0 0 28 28"><rect x="3.500" y="3" width="21" height="21" fill="none" stroke="#ffb02e" stroke-width="1.100" stroke-dasharray="3.600 2.200"/><path d="M11 8.700v10.800l2.800-2.600 5.200-.800z" fill="#f0f0f0"/></svg>
<svg style="left:14px;top:189px;" width="28" height="28" viewBox="0 0 28 28"><circle cx="14" cy="14" r="11.200" fill="none" stroke="#f4f4f4" stroke-width="1.300"/><circle cx="14" cy="14" r="11.200" fill="none" stroke="#a43232" stroke-width="1.300" stroke-dasharray="4.400 4.400"/><path d="M14 7v5M14 16v5M7 14h5M16 14h5" stroke="#8c8c8c" stroke-width="1.600"/></svg>
<svg style="left:14px;top:229.5px;" width="28" height="28" viewBox="0 0 28 28"><path d="M14 7.500v4M14 16.500v4M7.500 14h4M16.500 14h4" stroke="#ddd" stroke-width="1.500" stroke-dasharray="2.200 1.500"/><path d="M14 2.500l3.200 4.500h-6.400zM14 25.500l3.200-4.500h-6.400zM2.500 14l4.500-3.200v6.400zM25.500 14l-4.500-3.200v6.400z" fill="#eee"/></svg>
<svg style="left:14px;top:264px;" width="28" height="28" viewBox="0 0 28 28"><path d="M6 10.500a9 9 0 0 1 15.500-1.500M22 17.500a9 9 0 0 1-15.500 1.500" stroke="#ddd" stroke-width="1.200" fill="none"/><path d="M14 10.500l3.500 3.500-3.500 3.500-3.500-3.500z" fill="#c4c4c4"/><path d="M2.500 12.500h6.500l-3.200 4.500zM25.500 15.500h-6.500l3.200-4.500z" fill="#eee"/></svg>
<svg style="left:14px;top:299px;" width="28" height="28" viewBox="0 0 28 28"><rect x="5" y="13" width="9.500" height="9.500" fill="#e6e6e6"/><path d="M6.500 11v-6h16.500v16.500h-6.500" stroke="#c8c8c8" stroke-width="1.200" fill="none"/><path d="M15.500 12.500l5-5" stroke="#e6e6e6" stroke-width="1.300" fill="none"/><path d="M17.500 6.500h4.200v4.200z" fill="#e6e6e6"/></svg>
<svg style="left:14px;top:333.5px;" width="28" height="28" viewBox="0 0 28 28"><circle cx="14" cy="14" r="10.800" fill="none" stroke="#ddd" stroke-width="1.200" stroke-dasharray="10.500 6.460" stroke-dashoffset="-3.200"/><rect x="9.800" y="9.800" width="8.400" height="8.400" fill="#e8e8e8"/><path d="M14 3l2.600 3.600h-5.200zM14 25l2.600-3.600h-5.200zM3 14l3.600-2.600v5.200zM25 14l-3.600-2.600v5.200z" fill="#e8e8e8"/></svg>
<svg style="left:14px;top:374.5px;" width="28" height="28" viewBox="0 0 28 28"><path d="M3.500 19.800l1.200-3.800 11.500-11.500 3 3-11.500 11.500z" fill="#e6e6e6"/><path d="M14.700 6l3 3" stroke="#2b2b2b" stroke-width="1"/><path d="M3.500 21.500c5 3 8-1 11.500-3.800s6.500-2.500 9.500 1.800" stroke="#7fd4a0" stroke-width="1.300" fill="none"/></svg>
<svg style="left:14px;top:409px;" width="28" height="28" viewBox="0 0 28 28"><path d="M11 24V12.500a12 12 0 0 1 12 11.500z" fill="#8fdcb0"/><path d="M11 10.200a14.200 14.200 0 0 1 14 13.800" stroke="#8fdcb0" stroke-width="1.200" fill="none"/><path d="M5.500 4h5v1.300h-1.300v17.700h17v3.500h-20.700v-1.300h1.300v-19.900h-1.300z" fill="#e8e8e8"/><path d="M7 8h2M7 11h2M7 14h2M7 17h2M7 20h2M12 24.500v2M15 24.500v2M18 24.500v2M21 24.500v2M24 24.500v2" stroke="#2b2b2b" stroke-width=".900"/></svg>
<svg style="left:43px;top:180px;" width="5" height="5" viewBox="0 0 5 5"><path d="M5 0v5h-5z" fill="#9a9a9a"/></svg>
<svg style="left:43px;top:326px;" width="5" height="5" viewBox="0 0 5 5"><path d="M5 0v5h-5z" fill="#9a9a9a"/></svg>
<svg style="left:43px;top:400px;" width="5" height="5" viewBox="0 0 5 5"><path d="M5 0v5h-5z" fill="#9a9a9a"/></svg>
<div style="left:1330.5px;top:121px;width:31px;height:18px;background:#282828;border-radius:4px;box-shadow:0 0 0 0.5px #3a3a3a;"></div>
<svg style="left:1333px;top:122px;" width="18" height="16" viewBox="0 0 18 16"><path d="M6 5c2-3.300 8-3.300 10 0-2 3.300-8 3.300-10 0z" fill="none" stroke="#e6e6e6" stroke-width="1.300"/><circle cx="11" cy="4.800" r="1.500" fill="#e6e6e6"/><path d="M2.500 7l8 2.800-3.300 1.200-1.200 3.500z" fill="#e6e6e6"/></svg>
<svg style="left:1351px;top:128px;" width="8" height="6" viewBox="0 0 8 6"><path d="M0.8 1l3.2 3.2L7.2 1" stroke="#c8c8c8" stroke-width="1.5" fill="none"/></svg>
<div style="left:1367px;top:121px;width:20px;height:18px;background:#5680c2;border-radius:4px 0 0 4px;"></div>
<div style="left:1387px;top:121px;width:19.5px;height:18px;background:#282828;border-radius:0 4px 4px 0;"></div>
<svg style="left:1369px;top:122px;" width="16" height="16" viewBox="0 0 16 16"><path d="M3 13.500c1-6 5-9 10-10M9.500 2.500h4v4M13 3.500" stroke="#fff" stroke-width="1.2" fill="none"/><path d="M3.500 2.500c4 1 8 5 9 10.500" stroke="#dfe8f8" stroke-width="1" fill="none" opacity=".75"/><circle cx="3" cy="13.500" r="1.600" fill="#5680c2" stroke="#fff" stroke-width="1"/></svg>
<svg style="left:1393px;top:128px;" width="8" height="6" viewBox="0 0 8 6"><path d="M0.8 1l3.2 3.2L7.2 1" stroke="#c8c8c8" stroke-width="1.5" fill="none"/></svg>
<div style="left:1412.3px;top:121px;width:19.5px;height:18px;background:#5680c2;border-radius:4px 0 0 4px;"></div>
<div style="left:1431.8px;top:121px;width:19.8px;height:18px;background:#282828;border-radius:0 4px 4px 0;"></div>
<svg style="left:1414px;top:122px;" width="16" height="16" viewBox="0 0 16 16"><circle cx="9.500" cy="6.500" r="5" fill="#fff"/><circle cx="6.500" cy="9.500" r="5" fill="#5680c2" stroke="#fff" stroke-width="1.200"/><circle cx="8" cy="8" r="1.200" fill="#fff"/></svg>
<svg style="left:1438px;top:128px;" width="8" height="6" viewBox="0 0 8 6"><path d="M0.8 1l3.2 3.2L7.2 1" stroke="#c8c8c8" stroke-width="1.5" fill="none"/></svg>
<div style="left:1457.4px;top:121px;width:19.6px;height:18px;background:#8d8d8d;border-radius:4px;"></div>
<svg style="left:1459px;top:122px;" width="16" height="16" viewBox="0 0 16 16"><rect x="2.500" y="5.500" width="8.500" height="8.500" fill="none" stroke="#b8b8b8" stroke-width="1.200"/><path d="M5.500 5.500v-3h8.500v8.500h-3" fill="none" stroke="#b8b8b8" stroke-width="1.200"/><rect x="5.500" y="8.500" width="1.300" height="1.300" fill="#b8b8b8"/><rect x="8" y="8.500" width="1.300" height="1.300" fill="#b8b8b8"/></svg>
<div style="left:1482.4px;top:121px;width:19.3px;height:18px;background:#585858;border-radius:4px 0 0 4px;"></div>
<div style="left:1501.7px;top:121px;width:19.3px;height:18px;background:#585858;"></div>
<div style="left:1521px;top:121px;width:19.3px;height:18px;background:#585858;"></div>
<div style="left:1540.2px;top:121px;width:19.3px;height:18px;background:#5680c2;"></div>
<div style="left:1559.5px;top:121px;width:19px;height:18px;background:#282828;border-radius:0 4px 4px 0;"></div>
<div style="left:1501.3px;top:121px;width:0.8px;height:18px;background:#3d3d3d;"></div>
<div style="left:1520.6px;top:121px;width:0.8px;height:18px;background:#3d3d3d;"></div>
<div style="left:1539.8px;top:121px;width:0.8px;height:18px;background:#3d3d3d;"></div>
<svg style="left:1484px;top:122px;" width="16" height="16" viewBox="0 0 16 16"><circle cx="8" cy="8" r="6.300" fill="none" stroke="#d8d8d8" stroke-width="1.100"/><path d="M1.700 8h12.600M8 1.700v12.600M3 4.500c3 1.500 7 1.500 10 0M3 11.500c3-1.500 7-1.500 10 0" stroke="#d8d8d8" stroke-width="0.900" fill="none"/></svg>
<svg style="left:1503.5px;top:122px;" width="16" height="16" viewBox="0 0 16 16"><circle cx="8" cy="8" r="6.800" fill="#c9c9c9"/></svg>
<svg style="left:1522.8px;top:122px;" width="16" height="16" viewBox="0 0 16 16"><circle cx="8" cy="8" r="6.500" fill="#555" stroke="#d0d0d0" stroke-width="1"/><path d="M8 1.500a6.500 6.500 0 0 0 0 13zM8 8h6.500a6.500 6.500 0 0 1-3 5.300z" fill="#d0d0d0"/></svg>
<svg style="left:1542px;top:122px;" width="16" height="16" viewBox="0 0 16 16"><circle cx="8" cy="8" r="6.500" fill="none" stroke="#fff" stroke-width="1.300"/><path d="M4 8a4 4 0 0 1 4-4" stroke="#fff" stroke-width="1.600" fill="none"/><circle cx="8" cy="8" r="5" fill="#fff" opacity=".25"/></svg>
<svg style="left:1565px;top:128px;" width="8" height="6" viewBox="0 0 8 6"><path d="M0.8 1l3.2 3.2L7.2 1" stroke="#c8c8c8" stroke-width="1.5" fill="none"/></svg>
<div style="left:1578px;top:158px;width:8px;height:14px;background:#a9a9a9;border-radius:4px 0 0 4px;"></div>
<svg style="left:1579px;top:161px;" width="6" height="8" viewBox="0 0 6 8"><path d="M4.500 1l-3 3 3 3" stroke="#c4c4c4" stroke-width="1" fill="none"/></svg>
<svg style="left:1500px;top:150px;will-change:transform;" width="76" height="86" viewBox="0 0 76 86"><path d="M36 43V12" stroke="#2e8fff" stroke-width="2"/><path d="M36 43l25-4" stroke="#6b9b1e" stroke-width="2"/><path d="M36 43l19 4.500" stroke="#f03c55" stroke-width="2"/>
<circle cx="16.400" cy="38" r="6" fill="#9c3041"/><circle cx="10" cy="46.700" r="6.200" fill="#86d800"/><circle cx="36" cy="74.700" r="6" fill="#2b62a8"/>
<circle cx="36" cy="11.300" r="7.400" fill="#2e8fff"/><circle cx="61.800" cy="39" r="7.400" fill="#5d8a16"/><circle cx="55.500" cy="47.600" r="7.400" fill="#f33a56"/>
<text x="36" y="15.200" font-family="Liberation Sans" font-size="11" text-anchor="middle" fill="#000">Z</text><text x="61.800" y="43" font-family="Liberation Sans" font-size="11" text-anchor="middle" fill="#000">Y</text><text x="55.500" y="51.600" font-family="Liberation Sans" font-size="11" text-anchor="middle" fill="#000">X</text></svg>
<div style="left:1549px;top:233.6px;width:28px;height:28px;background:rgba(124,124,124,0.96);border-radius:14px;"></div>
<div style="left:1549px;top:264.2px;width:28px;height:28px;background:rgba(124,124,124,0.96);border-radius:14px;"></div>
<div style="left:1549px;top:294.6px;width:28px;height:28px;background:rgba(124,124,124,0.96);border-radius:14px;"></div>
<div style="left:1549px;top:325px;width:28px;height:28px;background:rgba(124,124,124,0.96);border-radius:14px;"></div>
<svg style="left:1553px;top:237.6px;" width="20" height="20" viewBox="0 0 20 20"><circle cx="11.800" cy="8" r="5" fill="none" stroke="#cfcfcf" stroke-width="1.700"/><path d="M8 11.800l-5 5" stroke="#cfcfcf" stroke-width="2.300" stroke-linecap="round"/><path d="M11.800 5.300v5.400M9.100 8h5.400" stroke="#cfcfcf" stroke-width="1"/></svg>
<svg style="left:1553px;top:268.2px;" width="20" height="20" viewBox="0 0 20 20"><path d="M6.300 11V5.200a.900.900 0 0 1 1.800 0V9.500 3.600a.900.900 0 0 1 1.800 0V9.500 4a.900.900 0 0 1 1.800 0V9.800 5.800a.900.900 0 0 1 1.800 0V12c0 3.500-2 5.300-4.800 5.300-2.200 0-3.400-1-4.600-3L2.300 11c-.600-1.100.700-1.900 1.500-1z" fill="#cfcfcf" stroke="#cfcfcf" stroke-width=".400"/></svg>
<svg style="left:1553px;top:298.6px;" width="20" height="20" viewBox="0 0 20 20"><circle cx="6.300" cy="6.200" r="3" fill="#cfcfcf"/><circle cx="12.600" cy="5.700" r="3.400" fill="#cfcfcf"/><rect x="5.500" y="10" width="8.500" height="6" rx="1" fill="#cfcfcf"/><path d="M14.500 12.500l3.500-2v5l-3.500-2zM5 12l-1.800-1v4l1.800-1z" fill="#cfcfcf"/><circle cx="6.300" cy="6.200" r="1.100" fill="#7c7c7c"/><circle cx="12.600" cy="5.700" r="1.300" fill="#7c7c7c"/></svg>
<svg style="left:1553px;top:329px;" width="20" height="20" viewBox="0 0 20 20"><path d="M6 4.500h8l3.500 11h-15z" fill="none" stroke="#cfcfcf" stroke-width="1.300"/><path d="M8.700 4.500l-1.500 11M11.300 4.500l1.500 11M4.800 8h10.400M3.600 11.500h12.800" stroke="#cfcfcf" stroke-width="1.100"/></svg>
<div style="left:1px;top:929px;width:1585px;height:129px;background:#282828;border-radius:5px;"></div>
<div style="left:1px;top:929px;width:1585px;height:25px;background:#3d3d3d;border-radius:5px 5px 0 0;"></div>
<div style="left:1px;top:954px;width:1585px;height:22.7px;background:#2a2a2a;"></div>
<div style="left:1px;top:976.7px;width:1585px;height:40.6px;background:#313131;"></div>
<div style="left:351.0535px;top:976.7px;width:419.3130000000001px;height:40.6px;background:#424242;"></div>
<div style="left:1px;top:1017.3px;width:1585px;height:29px;background:#282828;"></div>
<svg style="left:0px;top:976px;" width="1586" height="42" viewBox="0 0 1586 42"><path d="M27.7 0.7V41.3M63.2 0.7V41.3M98.8 0.7V41.3M134.3 0.7V41.3M169.8 0.7V41.3M205.4 0.7V41.3M240.9 0.7V41.3M276.4 0.7V41.3M312.0 0.7V41.3M347.5 0.7V41.3M383.0 0.7V41.3M418.6 0.7V41.3M454.1 0.7V41.3M489.6 0.7V41.3M525.2 0.7V41.3M560.7 0.7V41.3M596.2 0.7V41.3M631.8 0.7V41.3M667.3 0.7V41.3M702.9 0.7V41.3M738.4 0.7V41.3M773.9 0.7V41.3M809.5 0.7V41.3M845.0 0.7V41.3M880.5 0.7V41.3M916.1 0.7V41.3M951.6 0.7V41.3M987.1 0.7V41.3M1022.7 0.7V41.3M1058.2 0.7V41.3M1093.7 0.7V41.3M1129.3 0.7V41.3M1164.8 0.7V41.3M1200.3 0.7V41.3M1235.9 0.7V41.3M1271.4 0.7V41.3M1306.9 0.7V41.3M1342.5 0.7V41.3M1378.0 0.7V41.3M1413.5 0.7V41.3M1449.1 0.7V41.3M1484.6 0.7V41.3M1520.2 0.7V41.3M1555.7 0.7V41.3" stroke="#262626" stroke-width="1.2" opacity="1"/></svg>
<div style="left:350.7535px;top:976.7px;width:1.3px;height:40.6px;background:#000;"></div>
<div style="left:770.0665000000001px;top:976.7px;width:1.3px;height:40.6px;background:#000;"></div>
<span class="t" style="left:55.79px;top:960.69px;font-size:11px;line-height:11px;color:#b4b4b4;">-80</span>
<span class="t" style="left:126.73px;top:960.69px;font-size:11px;line-height:11px;color:#b4b4b4;">-60</span>
<span class="t" style="left:197.67px;top:960.69px;font-size:11px;line-height:11px;color:#b4b4b4;">-40</span>
<span class="t" style="left:268.61px;top:960.69px;font-size:11px;line-height:11px;color:#b4b4b4;">-20</span>
<span class="t" style="left:344.44px;top:960.69px;font-size:11px;line-height:11px;color:#b4b4b4;">0</span>
<span class="t" style="left:412.31px;top:960.69px;font-size:11px;line-height:11px;color:#b4b4b4;">20</span>
<span class="t" style="left:483.25px;top:960.69px;font-size:11px;line-height:11px;color:#b4b4b4;">40</span>
<span class="t" style="left:553.02px;top:960.69px;font-size:11px;line-height:11px;color:#b4b4b4;">6</span>
<span class="t" style="left:625.13px;top:960.69px;font-size:11px;line-height:11px;color:#b4b4b4;">80</span>
<span class="t" style="left:693.02px;top:960.69px;font-size:11px;line-height:11px;color:#b4b4b4;">100</span>
<span class="t" style="left:763.96px;top:960.69px;font-size:11px;line-height:11px;color:#b4b4b4;">120</span>
<span class="t" style="left:834.90px;top:960.69px;font-size:11px;line-height:11px;color:#b4b4b4;">140</span>
<span class="t" style="left:905.84px;top:960.69px;font-size:11px;line-height:11px;color:#b4b4b4;">160</span>
<span class="t" style="left:976.78px;top:960.69px;font-size:11px;line-height:11px;color:#b4b4b4;">180</span>
<span class="t" style="left:1047.72px;top:960.69px;font-size:11px;line-height:11px;color:#b4b4b4;">200</span>
<span class="t" style="left:1118.66px;top:960.69px;font-size:11px;line-height:11px;color:#b4b4b4;">220</span>
<span class="t" style="left:1189.60px;top:960.69px;font-size:11px;line-height:11px;color:#b4b4b4;">240</span>
<span class="t" style="left:1260.54px;top:960.69px;font-size:11px;line-height:11px;color:#b4b4b4;">260</span>
<span class="t" style="left:1331.48px;top:960.69px;font-size:11px;line-height:11px;color:#b4b4b4;">280</span>
<span class="t" style="left:1402.42px;top:960.69px;font-size:11px;line-height:11px;color:#b4b4b4;">300</span>
<span class="t" style="left:1473.36px;top:960.69px;font-size:11px;line-height:11px;color:#b4b4b4;">320</span>
<span class="t" style="left:1544.30px;top:960.69px;font-size:11px;line-height:11px;color:#b4b4b4;">340</span>
<svg style="left:435.3375px;top:976px;" width="2" height="56" viewBox="0 0 2 56"><path d="M1 0V54" stroke="#111" stroke-width="1.600" stroke-dasharray="2 2" opacity=".85"/></svg>
<svg style="left:453.105px;top:976px;" width="2" height="56" viewBox="0 0 2 56"><path d="M1 0V54" stroke="#111" stroke-width="1.600" stroke-dasharray="2 2" opacity=".85"/></svg>
<svg style="left:524.175px;top:976px;" width="2" height="56" viewBox="0 0 2 56"><path d="M1 0V54" stroke="#ddd" stroke-width="1.600" stroke-dasharray="2 2" opacity=".85"/></svg>
<svg style="left:431.3375px;top:1031px;" width="10" height="9" viewBox="0 0 10 9"><path d="M5 1.500l3.800 6.500h-7.600z" fill="none" stroke="#a8a8a8" stroke-width="1"/></svg>
<svg style="left:449.105px;top:1031px;" width="10" height="12" viewBox="0 0 10 12"><path d="M5 1.500l3.800 6.500h-7.600z" fill="none" stroke="#a8a8a8" stroke-width="1"/><path d="M2.500 11h5" stroke="#a8a8a8" stroke-width="1"/></svg>
<svg style="left:520.175px;top:1031px;" width="10" height="9" viewBox="0 0 10 9"><path d="M5 0.500l4.300 7.500h-8.600z" fill="#b4b4b4"/></svg>
<span class="t" style="left:445.00px;top:1031.69px;font-size:11px;line-height:11px;color:#9a9a9a;">F_25</span>
<span class="t" style="letter-spacing:0.230px;left:462.00px;top:1031.69px;font-size:11px;line-height:11px;color:#9a9a9a;">F_30</span>
<span class="t" style="letter-spacing:-0.020px;left:534.00px;top:1021.69px;font-size:11px;line-height:11px;color:#f0f0f0;">F_50</span>
<div style="left:571.3px;top:975px;width:1.7px;height:42.3px;background:#4b7bd0;"></div>
<div style="left:571.3px;top:1017.3px;width:1.7px;height:29px;background:#2c3850;"></div>
<div style="left:559px;top:956.5px;width:24.5px;height:18.5px;background:#5680c2;border-radius:4px;"></div>
<span class="t" style="left:565.08px;top:960.69px;font-size:11px;line-height:11px;color:#fff;">63</span>
<div style="left:9px;top:1048px;width:1568px;height:8px;background:#626262;border-radius:4px;"></div>
<div style="left:10.5px;top:1049px;width:5.5px;height:5.5px;background:#8a8a8a;border-radius:3px;"></div>
<div style="left:1570px;top:1049px;width:5.5px;height:5.5px;background:#8a8a8a;border-radius:3px;"></div>
<div style="left:0px;top:966px;width:7.5px;height:16px;background:#262626;border-radius:0 5px 5px 0;"></div>
<svg style="left:0px;top:968px;" width="8" height="12" viewBox="0 0 8 12"><path d="M2 2l3.500 4-3.500 4" stroke="#888" stroke-width="1" fill="none"/></svg>
<div style="left:1578px;top:965px;width:8px;height:20px;background:#2f2f2f;border-radius:4px 0 0 4px;"></div>
<svg style="left:1578px;top:969px;" width="8" height="12" viewBox="0 0 8 12"><path d="M5.500 2l-3.500 4 3.500 4" stroke="#999" stroke-width="1" fill="none"/></svg>
<div style="left:9px;top:933px;width:30px;height:18.5px;background:#2c2c2c;border-radius:4px;box-shadow:inset 0 0 0 1px #3a3a3a;"></div>
<svg style="left:12px;top:934px;" width="16" height="16" viewBox="0 0 16 16"><circle cx="8" cy="8" r="6.800" fill="#e6e6e6"/><path d="M9.800 4.200l-3.400 3.800 3.400 3.800" stroke="#2c2c2c" stroke-width="1.600" fill="none"/></svg>
<svg style="left:30px;top:940px;" width="8" height="6" viewBox="0 0 8 6"><path d="M0.8 1l3.2 3.2L7.2 1" stroke="#c8c8c8" stroke-width="1.500" fill="none"/></svg>
<div style="left:46px;top:933px;width:68.5px;height:18.5px;background:#2c2c2c;border-radius:4px 0 0 4px;box-shadow:inset 0 0 0 1px #3a3a3a;"></div>
<span class="t" style="letter-spacing:0.045px;left:52.00px;top:936.69px;font-size:11px;line-height:11px;color:#e0e0e0;">Playback</span>
<svg style="left:104px;top:940px;" width="8" height="6" viewBox="0 0 8 6"><path d="M0.8 1l3.2 3.2L7.2 1" stroke="#c8c8c8" stroke-width="1.500" fill="none"/></svg>
<div style="left:115px;top:933px;width:58.5px;height:18.5px;background:#2c2c2c;border-radius:0 4px 4px 0;box-shadow:inset 0 0 0 1px #3a3a3a;"></div>
<span class="t" style="letter-spacing:0.060px;left:121.00px;top:936.69px;font-size:11px;line-height:11px;color:#e0e0e0;">Keying</span>
<svg style="left:163px;top:940px;" width="8" height="6" viewBox="0 0 8 6"><path d="M0.8 1l3.2 3.2L7.2 1" stroke="#c8c8c8" stroke-width="1.500" fill="none"/></svg>
<span class="t" style="letter-spacing:0.211px;left:181.00px;top:936.69px;font-size:11px;line-height:11px;color:#e0e0e0;">View</span>
<span class="t" style="letter-spacing:0.211px;left:221.00px;top:936.69px;font-size:11px;line-height:11px;color:#e0e0e0;">Marker</span>
<div style="left:711px;top:933px;width:18.5px;height:18.5px;background:#585858;border-radius:4px;"></div>
<div style="left:717px;top:939px;width:7px;height:7px;background:#e6e6e6;border-radius:4px;"></div>
<div style="left:736px;top:933px;width:19.6px;height:18.5px;background:#585858;border-radius:4px 0 0 4px;"></div>
<div style="left:755.6px;top:933px;width:19.6px;height:18.5px;background:#585858;"></div>
<div style="left:755.1px;top:933px;width:1px;height:18.5px;background:#444;"></div>
<div style="left:775.2px;top:933px;width:19.6px;height:18.5px;background:#585858;"></div>
<div style="left:774.7px;top:933px;width:1px;height:18.5px;background:#444;"></div>
<div style="left:794.8px;top:933px;width:19.6px;height:18.5px;background:#585858;"></div>
<div style="left:794.3px;top:933px;width:1px;height:18.5px;background:#444;"></div>
<div style="left:814.4px;top:933px;width:19.6px;height:18.5px;background:#585858;"></div>
<div style="left:813.9px;top:933px;width:1px;height:18.5px;background:#444;"></div>
<div style="left:834px;top:933px;width:20px;height:18.5px;background:#585858;border-radius:0 4px 4px 0;"></div>
<div style="left:833.5px;top:933px;width:1px;height:18.5px;background:#444;"></div>
<svg style="left:737px;top:934px;" width="17" height="17" viewBox="0 0 17 17"><rect x="3.500" y="4" width="1.800" height="9" fill="#f0f0f0"/><path d="M13 4v9l-6.500-4.500z" fill="#f0f0f0"/></svg>
<svg style="left:756.6px;top:934px;" width="17" height="17" viewBox="0 0 17 17"><path d="M9.600 8.500l-4.600-5-4.600 5 4.600 5z M16 4v9l-5-4.500z" fill="#f0f0f0"/></svg>
<svg style="left:776.2px;top:934px;" width="17" height="17" viewBox="0 0 17 17"><path d="M13 2.500v12l-10-6z" fill="#f0f0f0"/></svg>
<svg style="left:795.8px;top:934px;" width="17" height="17" viewBox="0 0 17 17"><path d="M4 2.500v12l10-6z" fill="#f0f0f0"/></svg>
<svg style="left:815.4px;top:934px;" width="17" height="17" viewBox="0 0 17 17"><path d="M7.400 8.500l4.600-5 4.600 5-4.600 5z M1 4v9l5-4.500z" fill="#f0f0f0"/></svg>
<svg style="left:835px;top:934px;" width="17" height="17" viewBox="0 0 17 17"><rect x="11.700" y="4" width="1.800" height="9" fill="#f0f0f0"/><path d="M4 4v9l6.500-4.500z" fill="#f0f0f0"/></svg>
<div style="left:1296.5px;top:933px;width:73.5px;height:18.5px;background:#585858;border-radius:4px;"></div>
<span class="t" style="left:1326.88px;top:936.69px;font-size:11px;line-height:11px;color:#e6e6e6;">63</span>
<div style="left:1377px;top:933px;width:19px;height:18.5px;background:#585858;border-radius:4px 0 0 4px;"></div>
<svg style="left:1378.5px;top:934px;" width="16" height="16" viewBox="0 0 16 16"><circle cx="8" cy="9" r="5.800" fill="none" stroke="#e6e6e6" stroke-width="1.300"/><path d="M8 5.500v3.700h3M6.300 1.500h3.400M12.500 3.500l1.200 1.200" stroke="#e6e6e6" stroke-width="1.200" fill="none"/></svg>
<div style="left:1396.5px;top:933px;width:87px;height:18.5px;background:#585858;"></div>
<div style="left:1484.3px;top:933px;width:83.2px;height:18.5px;background:#585858;border-radius:0 4px 4px 0;"></div>
<div style="left:1396px;top:933px;width:1px;height:18.5px;background:#444;"></div>
<div style="left:1483.7px;top:933px;width:1px;height:18.5px;background:#444;"></div>
<span class="t" style="letter-spacing:0.153px;left:1410.00px;top:936.69px;font-size:11px;line-height:11px;color:#e6e6e6;">Start</span>
<span class="t" style="left:1463.00px;top:936.69px;font-size:11px;line-height:11px;color:#e6e6e6;">1</span>
<span class="t" style="letter-spacing:-0.359px;left:1498.00px;top:936.69px;font-size:11px;line-height:11px;color:#e6e6e6;">End</span>
<span class="t" style="letter-spacing:0.984px;left:1533.00px;top:936.69px;font-size:11px;line-height:11px;color:#e6e6e6;">119</span>
<div style="left:0px;top:1058px;width:1920px;height:22px;background:#303030;"></div>
<svg style="left:11px;top:1061.5px;" width="12" height="16" viewBox="0 0 12 16"><rect x="1.500" y="1.500" width="9" height="13" rx="3" fill="none" stroke="#cfcfcf" stroke-width="1.200"/><path d="M2 2h4v5H2z" fill="#cfcfcf"/></svg>
<span class="t" style="letter-spacing:0.070px;left:34.00px;top:1064.69px;font-size:11px;line-height:11px;color:#c4c4c4;">Select</span>
<svg style="left:76px;top:1061.5px;" width="12" height="16" viewBox="0 0 12 16"><rect x="1.500" y="1.500" width="9" height="13" rx="3" fill="none" stroke="#cfcfcf" stroke-width="1.200"/><path d="M2 2h4v5H2z" fill="#cfcfcf"/></svg>
<svg style="left:88px;top:1062px;" width="6" height="9" viewBox="0 0 6 9"><path d="M1 1v6M3.500 2v4" stroke="#cfcfcf" stroke-width="1"/></svg>
<span class="t" style="letter-spacing:0.041px;left:100.00px;top:1064.69px;font-size:11px;line-height:11px;color:#c4c4c4;">Box Select</span>
<svg style="left:247.5px;top:1061.5px;" width="12" height="16" viewBox="0 0 12 16"><rect x="1.500" y="1.500" width="9" height="13" rx="3" fill="none" stroke="#cfcfcf" stroke-width="1.200"/><rect x="4.800" y="3" width="2.400" height="5" rx="1" fill="#cfcfcf"/></svg>
<span class="t" style="letter-spacing:0.126px;left:270.00px;top:1064.69px;font-size:11px;line-height:11px;color:#c4c4c4;">Rotate View</span>
<svg style="left:483.5px;top:1061.5px;" width="12" height="16" viewBox="0 0 12 16"><rect x="1.500" y="1.500" width="9" height="13" rx="3" fill="none" stroke="#cfcfcf" stroke-width="1.200"/><path d="M6 2h4v5H6z" fill="#cfcfcf"/></svg>
<span class="t" style="letter-spacing:0.113px;left:506.00px;top:1064.69px;font-size:11px;line-height:11px;color:#c4c4c4;">Object Context Menu</span>
<span class="t" style="letter-spacing:0.125px;left:1313.00px;top:1064.69px;font-size:11px;line-height:11px;color:#c4c4c4;">GPENCIL_SPLASH | fish_rig | Verts:45,083 | Faces:44,993 | Tris:89,858 | Objects:0/19 | Mem: 108.6 MiB | v2.81.16</span>
<div style="left:1589px;top:92px;width:329.5px;height:308.5px;background:#282828;border-radius:5px;"></div>
<div style="left:1589px;top:92px;width:329.5px;height:25px;background:#424242;border-radius:5px 5px 0 0;"></div>
<div style="left:1597.7px;top:95.5px;width:30.5px;height:18px;background:#2c2c2c;border-radius:4px;box-shadow:inset 0 0 0 1px #3a3a3a;"></div>
<svg style="left:1600px;top:96.5px;" width="16" height="16" viewBox="0 0 16 16"><rect x="1.500" y="2" width="5" height="2.600" fill="#e0e0e0"/><rect x="7" y="7" width="7.500" height="2.600" fill="#e0e0e0"/><rect x="7" y="11.500" width="7.500" height="2.600" fill="#e0e0e0"/><path d="M3.500 4.600v8.200h3.500M3.500 8.300h3.500" stroke="#e0e0e0" stroke-width="1" fill="none"/></svg>
<svg style="left:1618px;top:102.5px;" width="8" height="6" viewBox="0 0 8 6"><path d="M0.8 1l3.2 3.2L7.2 1" stroke="#c8c8c8" stroke-width="1.500" fill="none"/></svg>
<div style="left:1635px;top:95.5px;width:30.5px;height:18px;background:#2c2c2c;border-radius:4px;box-shadow:inset 0 0 0 1px #3a3a3a;"></div>
<svg style="left:1637px;top:96.5px;" width="17" height="17" viewBox="0 0 17 17"><rect x="5" y="1.500" width="10" height="10" fill="none" stroke="#e0e0e0" stroke-width="1.100"/><path d="M6 10.500l3-5 2 3 1.500-1.500 2 3.500z" fill="#e0e0e0"/><circle cx="12.500" cy="4" r="1" fill="#e0e0e0"/><path d="M3 4v9.500h9.500M1 6.500v9h9.500" stroke="#e0e0e0" stroke-width="1" fill="none"/></svg>
<svg style="left:1655px;top:102.5px;" width="8" height="6" viewBox="0 0 8 6"><path d="M0.8 1l3.2 3.2L7.2 1" stroke="#c8c8c8" stroke-width="1.500" fill="none"/></svg>
<div style="left:1689px;top:95.5px;width:109px;height:18px;background:#1d1d1d;border-radius:4px;"></div>
<svg style="left:1692px;top:96.5px;" width="16" height="16" viewBox="0 0 16 16"><circle cx="10" cy="6" r="4.300" fill="none" stroke="#d8d8d8" stroke-width="1.300"/><path d="M7 9.500l-5 5" stroke="#d8d8d8" stroke-width="1.400"/></svg>
<div style="left:1855.7px;top:95.5px;width:30.7px;height:18px;background:#2c2c2c;border-radius:4px;box-shadow:inset 0 0 0 1px #3a3a3a;"></div>
<svg style="left:1858px;top:96.5px;" width="16" height="16" viewBox="0 0 16 16"><path d="M2 2.500h12l-4.700 6v5.500l-2.600-2v-3.500z" fill="none" stroke="#e0e0e0" stroke-width="1.200"/></svg>
<svg style="left:1876px;top:102.5px;" width="8" height="6" viewBox="0 0 8 6"><path d="M0.8 1l3.2 3.2L7.2 1" stroke="#c8c8c8" stroke-width="1.500" fill="none"/></svg>
<div style="left:1893px;top:95.5px;width:18px;height:18px;background:#585858;border-radius:4px;"></div>
<svg style="left:1894px;top:96.5px;" width="16" height="16" viewBox="0 0 16 16"><path d="M1.500 4.500h9v2.500h-9zM2.500 7v7h7.500V7M4.800 9.500h3v1.300h-3z" fill="none" stroke="#cfcfcf" stroke-width="1"/><circle cx="12" cy="4" r="3.700" fill="#ececec"/><path d="M12 2.200v3.600M10.200 4h3.600" stroke="#505050" stroke-width=".900"/></svg>
<div style="left:1589px;top:118.5px;width:329.5px;height:20px;background:#2c2c2c;"></div>
<div style="left:1589px;top:158.5px;width:329.5px;height:20px;background:#2c2c2c;"></div>
<div style="left:1589px;top:198.5px;width:329.5px;height:20px;background:#2c2c2c;"></div>
<div style="left:1589px;top:238.5px;width:329.5px;height:20px;background:#2c2c2c;border-radius:0;"></div>
<div style="left:1589px;top:278.5px;width:329.5px;height:20px;background:#2c2c2c;border-radius:0;"></div>
<div style="left:1589px;top:318.5px;width:329.5px;height:20px;background:#2c2c2c;border-radius:0;"></div>
<div style="left:1589px;top:358.5px;width:329.5px;height:20px;background:#2c2c2c;border-radius:0;"></div>
<div style="left:1589px;top:218.5px;width:329.5px;height:19.7px;background:#3c5689;"></div>
<svg style="left:1611px;top:120.5px;" width="16" height="16" viewBox="0 0 16 16"><path d="M1.500 2h13v3h-13zM2.800 5v9.500h10.400V5M6 8.500h4v1.800h-4z" fill="none" stroke="#e0e0e0" stroke-width="1.200"/></svg>
<span class="t" style="letter-spacing:0.027px;left:1633.00px;top:123.69px;font-size:11px;line-height:11px;color:#e0e0e0;">Scene Collection</span>
<svg style="left:1615.5px;top:145px;" width="8" height="8" viewBox="0 0 8 8"><path d="M0.800 1.500h6.400l-3.200 5z" fill="#a8a8a8"/></svg>
<div style="left:1633.5px;top:143.3px;width:10.5px;height:10.5px;background:#e6e6e6;border-radius:2px;"></div>
<svg style="left:1633.5px;top:143.3px;" width="11" height="11" viewBox="0 0 11 11"><path d="M2.300 5.500l2.300 2.500 4-5" stroke="#222" stroke-width="1.600" fill="none"/></svg>
<svg style="left:1651.5px;top:140.5px;" width="16" height="16" viewBox="0 0 16 16"><path d="M1.500 2h13v3h-13zM2.800 5v9.500h10.400V5M6 8.500h4v1.800h-4z" fill="none" stroke="#e0e0e0" stroke-width="1.200"/></svg>
<span class="t" style="letter-spacing:-0.641px;left:1673.30px;top:143.69px;font-size:11px;line-height:11px;color:#e0e0e0;">FISH</span>
<svg style="left:1854.5px;top:140.5px;" width="16" height="16" viewBox="0 0 16 16"><path d="M1 8c3-5.500 11-5.500 14 0-3 5.500-11 5.500-14 0z" fill="none" stroke="#e0e0e0" stroke-width="1.400"/><circle cx="8" cy="8" r="2.800" fill="#e0e0e0"/><circle cx="8" cy="8" r="1.100" fill="#282828"/></svg>
<svg style="left:1874px;top:140.5px;" width="16" height="16" viewBox="0 0 16 16"><rect x="1.500" y="2.500" width="13" height="8.500" rx="1" fill="none" stroke="#e0e0e0" stroke-width="1.300"/><rect x="3.500" y="4.500" width="9" height="4.500" fill="#e0e0e0"/><path d="M8 11v2.500M4.500 14h7" stroke="#e0e0e0" stroke-width="1.300"/></svg>
<svg style="left:1893.5px;top:140.5px;" width="16" height="16" viewBox="0 0 16 16"><path d="M1.500 4.500h3l1-2h5l1 2h3v9.500h-13z" fill="#e0e0e0"/><circle cx="8" cy="9" r="3.300" fill="none" stroke="#333" stroke-width="1.200"/><circle cx="8" cy="9" r="1.400" fill="#333"/></svg>
<svg style="left:1636px;top:154px;" width="16" height="18" viewBox="0 0 16 18"><path d="M2.500 0v14.500h12" stroke="#8a8a8a" stroke-width="1" fill="none"/></svg>
<svg style="left:1635.5px;top:164.5px;" width="8" height="8" viewBox="0 0 8 8"><path d="M1.500 0.800v6.400l5-3.200z" fill="#b8b8b8"/></svg>
<div style="left:1649px;top:159px;width:20px;height:18.5px;background:#585858;border-radius:4px;"></div>
<svg style="left:1651px;top:160px;" width="16" height="16" viewBox="0 0 16 16"><circle cx="9.500" cy="2.800" r="1.700" fill="#e19a58"/><path d="M2 3.500l4.500 2.500h6.500M8.500 6l-1 4.500-4.500 4.500M7.700 10l5.500 4.200" stroke="#e19a58" stroke-width="2.3" fill="none" stroke-linecap="round"/></svg>
<span class="t" style="letter-spacing:-0.059px;left:1673.30px;top:163.69px;font-size:11px;line-height:11px;color:#e0e0e0;">fish_rig</span>
<svg style="left:1854.5px;top:160.5px;" width="16" height="16" viewBox="0 0 16 16"><path d="M1 8c3-5.500 11-5.500 14 0-3 5.500-11 5.500-14 0z" fill="none" stroke="#e0e0e0" stroke-width="1.400"/><circle cx="8" cy="8" r="2.800" fill="#e0e0e0"/><circle cx="8" cy="8" r="1.100" fill="#282828"/></svg>
<svg style="left:1874px;top:160.5px;" width="16" height="16" viewBox="0 0 16 16"><rect x="1.500" y="2.500" width="13" height="8.500" rx="1" fill="none" stroke="#e0e0e0" stroke-width="1.300"/><rect x="3.500" y="4.500" width="9" height="4.500" fill="#e0e0e0"/><path d="M8 11v2.500M4.500 14h7" stroke="#e0e0e0" stroke-width="1.300"/></svg>
<svg style="left:1893.5px;top:160.5px;" width="16" height="16" viewBox="0 0 16 16"><path d="M1.500 4.500h3l1-2h5l1 2h3v9.500h-13z" fill="#e0e0e0"/><circle cx="8" cy="9" r="3.300" fill="none" stroke="#333" stroke-width="1.200"/><circle cx="8" cy="9" r="1.400" fill="#333"/></svg>
<svg style="left:1731px;top:161px;" width="16" height="16" viewBox="0 0 16 16"><path d="M1.500 2.500h4c4 0 4 3.500 1.500 5.500s-2 5 2 5h5M11.500 10.500l2.800 2.500-2.800 2.500" stroke="#c0c0c0" stroke-width="1.200" fill="none"/></svg>
<svg style="left:1750.5px;top:161px;" width="16" height="16" viewBox="0 0 16 16"><circle cx="9.500" cy="2.800" r="1.700" fill="#2fc79a"/><path d="M2 3.500l4.500 2.500h6.500M8.500 6l-1 4.500-4.500 4.500M7.700 10l5.500 4.200" stroke="#2fc79a" stroke-width="1.3" fill="none" stroke-linecap="round"/></svg>
<svg style="left:1770.5px;top:161px;" width="16" height="16" viewBox="0 0 16 16"><rect x="1" y="2.500" width="3" height="2.500" fill="none" stroke="#2fc79a" stroke-width="1"/><circle cx="9.500" cy="2.800" r="1.600" fill="#2fc79a"/><path d="M4 4.500l4.500 1.500h6M8.500 6v4l-4 5M8.500 10l4.500 5" stroke="#2fc79a" stroke-width="1.300" fill="none"/></svg>
<svg style="left:1790px;top:160.5px;" width="16" height="16" viewBox="0 0 16 16"><path d="M2 2.500h11.500l-5.700 10.500z" fill="none" stroke="#e19a58" stroke-width="2.400" stroke-linejoin="round"/></svg>
<div style="left:1800.0px;top:167.5px;width:9px;height:9px;background:#111;border-radius:5px;"></div>
<span class="t" style="left:1802.13px;top:168.00px;font-size:8.5px;line-height:8.5px;color:#fff;">3</span>
<svg style="left:1615.5px;top:184.5px;" width="8" height="8" viewBox="0 0 8 8"><path d="M1.500 0.800v6.400l5-3.200z" fill="#b8b8b8"/></svg>
<div style="left:1633.5px;top:183.3px;width:10.5px;height:10.5px;background:#e6e6e6;border-radius:2px;"></div>
<svg style="left:1633.5px;top:183.3px;" width="11" height="11" viewBox="0 0 11 11"><path d="M2.300 5.500l2.300 2.500 4-5" stroke="#222" stroke-width="1.600" fill="none"/></svg>
<svg style="left:1651.5px;top:180.5px;" width="16" height="16" viewBox="0 0 16 16"><path d="M1.500 2h13v3h-13zM2.800 5v9.500h10.400V5M6 8.500h4v1.800h-4z" fill="none" stroke="#e0e0e0" stroke-width="1.200"/></svg>
<span class="t" style="letter-spacing:-0.427px;left:1673.30px;top:183.69px;font-size:11px;line-height:11px;color:#e0e0e0;">STUDIO</span>
<svg style="left:1854.5px;top:180.5px;" width="16" height="16" viewBox="0 0 16 16"><path d="M1 8c3-5.500 11-5.500 14 0-3 5.500-11 5.500-14 0z" fill="none" stroke="#e0e0e0" stroke-width="1.400"/><circle cx="8" cy="8" r="2.800" fill="#e0e0e0"/><circle cx="8" cy="8" r="1.100" fill="#282828"/></svg>
<svg style="left:1874px;top:180.5px;" width="16" height="16" viewBox="0 0 16 16"><rect x="1.500" y="2.500" width="13" height="8.500" rx="1" fill="none" stroke="#e0e0e0" stroke-width="1.300"/><rect x="3.500" y="4.500" width="9" height="4.500" fill="#e0e0e0"/><path d="M8 11v2.500M4.500 14h7" stroke="#e0e0e0" stroke-width="1.300"/></svg>
<svg style="left:1893.5px;top:180.5px;" width="16" height="16" viewBox="0 0 16 16"><path d="M1.500 4.500h3l1-2h5l1 2h3v9.500h-13z" fill="#e0e0e0"/><circle cx="8" cy="9" r="3.300" fill="none" stroke="#333" stroke-width="1.200"/><circle cx="8" cy="9" r="1.400" fill="#333"/></svg>
<svg style="left:1734px;top:180.5px;" width="16" height="16" viewBox="0 0 16 16"><path d="M2 2.500h11.500l-5.700 10.500z" fill="none" stroke="#e19a58" stroke-width="2.400" stroke-linejoin="round"/></svg>
<svg style="left:1753.5px;top:180.5px;" width="16" height="16" viewBox="0 0 16 16"><path d="M3.500 2.500c6-1.500 10.500 1 10 5s-5.500 6-11.500 5.500" stroke="#e19a58" stroke-width="2.400" fill="none" stroke-linecap="round"/></svg>
<svg style="left:1773.5px;top:180.5px;" width="17" height="16" viewBox="0 0 17 16"><circle cx="5" cy="4.500" r="3.300" fill="#e19a58"/><circle cx="11.500" cy="4" r="3.800" fill="#e19a58"/><rect x="2.500" y="8" width="11" height="6.500" rx="1" fill="#e19a58"/><path d="M13.500 10.500l3-1.800v5.600l-3-1.800z" fill="#e19a58"/><circle cx="5" cy="4.500" r="1" fill="#282828"/><circle cx="11.500" cy="4" r="1.300" fill="#282828"/></svg>
<svg style="left:1615.5px;top:204.5px;" width="8" height="8" viewBox="0 0 8 8"><path d="M1.500 0.800v6.400l5-3.200z" fill="#b8b8b8"/></svg>
<div style="left:1633.5px;top:203.3px;width:10.5px;height:10.5px;background:#e6e6e6;border-radius:2px;"></div>
<svg style="left:1633.5px;top:203.3px;" width="11" height="11" viewBox="0 0 11 11"><path d="M2.300 5.500l2.300 2.500 4-5" stroke="#222" stroke-width="1.600" fill="none"/></svg>
<svg style="left:1651.5px;top:200.5px;" width="16" height="16" viewBox="0 0 16 16"><path d="M1.500 2h13v3h-13zM2.800 5v9.500h10.400V5M6 8.500h4v1.800h-4z" fill="none" stroke="#e0e0e0" stroke-width="1.200"/></svg>
<span class="t" style="letter-spacing:-1.103px;left:1673.30px;top:203.69px;font-size:11px;line-height:11px;color:#e0e0e0;">PROPS</span>
<svg style="left:1854.5px;top:200.5px;" width="16" height="16" viewBox="0 0 16 16"><path d="M1 8c3-5.500 11-5.500 14 0-3 5.500-11 5.500-14 0z" fill="none" stroke="#e0e0e0" stroke-width="1.400"/><circle cx="8" cy="8" r="2.800" fill="#e0e0e0"/><circle cx="8" cy="8" r="1.100" fill="#282828"/></svg>
<svg style="left:1874px;top:200.5px;" width="16" height="16" viewBox="0 0 16 16"><rect x="1.500" y="2.500" width="13" height="8.500" rx="1" fill="none" stroke="#e0e0e0" stroke-width="1.300"/><rect x="3.500" y="4.500" width="9" height="4.500" fill="#e0e0e0"/><path d="M8 11v2.500M4.500 14h7" stroke="#e0e0e0" stroke-width="1.300"/></svg>
<svg style="left:1893.5px;top:200.5px;" width="16" height="16" viewBox="0 0 16 16"><path d="M1.500 4.500h3l1-2h5l1 2h3v9.500h-13z" fill="#e0e0e0"/><circle cx="8" cy="9" r="3.300" fill="none" stroke="#333" stroke-width="1.200"/><circle cx="8" cy="9" r="1.400" fill="#333"/></svg>
<svg style="left:1728px;top:200.5px;" width="14" height="16" viewBox="0 0 14 16"><path d="M6 1.500v7.500l-4.500 4.500M6 9l6 3.500" stroke="#e19a58" stroke-width="2.300" fill="none" stroke-linecap="round"/></svg>
<div style="left:1737.9px;top:207.5px;width:9px;height:9px;background:#111;border-radius:5px;"></div>
<span class="t" style="left:1740.03px;top:208.00px;font-size:8.5px;line-height:8.5px;color:#fff;">4</span>
<svg style="left:1748.5px;top:200.5px;" width="16" height="16" viewBox="0 0 16 16"><path d="M2 2.500h11.500l-5.700 10.500z" fill="none" stroke="#e19a58" stroke-width="2.400" stroke-linejoin="round"/></svg>
<div style="left:1757.9px;top:207.5px;width:9px;height:9px;background:#111;border-radius:5px;"></div>
<span class="t" style="left:1760.03px;top:208.00px;font-size:8.5px;line-height:8.5px;color:#fff;">2</span>
<svg style="left:1767.5px;top:200.5px;" width="16" height="16" viewBox="0 0 16 16"><path d="M3.500 2.500c6-1.500 10.500 1 10 5s-5.500 6-11.500 5.500" stroke="#e19a58" stroke-width="2.400" fill="none" stroke-linecap="round"/></svg>
<div style="left:1777.9px;top:207.5px;width:9px;height:9px;background:#111;border-radius:5px;"></div>
<span class="t" style="left:1780.03px;top:208.00px;font-size:8.5px;line-height:8.5px;color:#fff;">4</span>
<svg style="left:1615.5px;top:224.5px;" width="8" height="8" viewBox="0 0 8 8"><path d="M1.500 0.800v6.400l5-3.200z" fill="#d0d0d0"/></svg>
<div style="left:1633.5px;top:223.3px;width:10.5px;height:10.5px;background:#e6e6e6;border-radius:2px;"></div>
<svg style="left:1633.5px;top:223.3px;" width="11" height="11" viewBox="0 0 11 11"><path d="M2.300 5.500l2.300 2.500 4-5" stroke="#222" stroke-width="1.600" fill="none"/></svg>
<div style="left:1649px;top:219px;width:20px;height:18.5px;background:#4f6a9c;border-radius:4px;box-shadow:inset 0 0 0 1px #6a84b4;"></div>
<svg style="left:1651.5px;top:220.5px;" width="16" height="16" viewBox="0 0 16 16"><path d="M1.500 2h13v3h-13zM2.800 5v9.500h10.400V5M6 8.500h4v1.800h-4z" fill="none" stroke="#e0e0e0" stroke-width="1.200"/></svg>
<span class="t" style="letter-spacing:-0.773px;left:1673.30px;top:223.69px;font-size:11px;line-height:11px;color:#e8e8e8;">GPENCIL_SPLASH</span>
<svg style="left:1854.5px;top:220.5px;" width="16" height="16" viewBox="0 0 16 16"><path d="M1 8c3-5.500 11-5.500 14 0-3 5.500-11 5.500-14 0z" fill="none" stroke="#e0e0e0" stroke-width="1.400"/><circle cx="8" cy="8" r="2.800" fill="#e0e0e0"/><circle cx="8" cy="8" r="1.100" fill="#282828"/></svg>
<svg style="left:1874px;top:220.5px;" width="16" height="16" viewBox="0 0 16 16"><rect x="1.500" y="2.500" width="13" height="8.500" rx="1" fill="none" stroke="#e0e0e0" stroke-width="1.300"/><rect x="3.500" y="4.500" width="9" height="4.500" fill="#e0e0e0"/><path d="M8 11v2.500M4.500 14h7" stroke="#e0e0e0" stroke-width="1.300"/></svg>
<svg style="left:1893.5px;top:220.5px;" width="16" height="16" viewBox="0 0 16 16"><path d="M1.500 4.500h3l1-2h5l1 2h3v9.500h-13z" fill="#e0e0e0"/><circle cx="8" cy="9" r="3.300" fill="none" stroke="#333" stroke-width="1.200"/><circle cx="8" cy="9" r="1.400" fill="#333"/></svg>
<svg style="left:1783px;top:220.5px;" width="16" height="16" viewBox="0 0 16 16"><path d="M2 13.500c2.500 0 1.500-6 4-7s3 3 5 2.500M9.500 3.500c1.500-1.500 3-1.800 4.500-1.500" stroke="#e19a58" stroke-width="2.200" fill="none" stroke-linecap="round"/></svg>
<div style="left:1793.0px;top:227.5px;width:9px;height:9px;background:#111;border-radius:5px;"></div>
<span class="t" style="left:1795.13px;top:228.00px;font-size:8.5px;line-height:8.5px;color:#fff;">2</span>
<div style="left:1589px;top:404px;width:329.5px;height:654px;background:#232323;border-radius:5px;"></div>
<div style="left:1617px;top:429px;width:301.5px;height:629px;background:#424242;border-radius:0 0 5px 0;"></div>
<div style="left:1589px;top:404px;width:329.5px;height:25px;background:#3e3e3e;border-radius:5px 5px 0 0;"></div>
<div style="left:1597.7px;top:407px;width:30.7px;height:18px;background:#2c2c2c;border-radius:4px;box-shadow:inset 0 0 0 1px #3a3a3a;"></div>
<svg style="left:1600px;top:408px;" width="16" height="16" viewBox="0 0 16 16"><rect x="1.500" y="2.500" width="12" height="5" rx="2.500" fill="#e6e6e6"/><rect x="1.500" y="9" width="12" height="5" rx="2.500" fill="#e6e6e6"/><path d="M7.500 3.500h3.500a1.500 1.500 0 0 1 0 3h-3.500zM10 10h1.200a1.500 1.500 0 0 1 0 3h-1.200z" fill="#2c2c2c"/></svg>
<svg style="left:1618px;top:414px;" width="8" height="6" viewBox="0 0 8 6"><path d="M0.8 1l3.2 3.2L7.2 1" stroke="#c8c8c8" stroke-width="1.500" fill="none"/></svg>
<svg style="left:1642px;top:408px;" width="16" height="16" viewBox="0 0 16 16"><rect x="4" y="4" width="8" height="8" fill="#e6e6e6"/><path d="M1.500 4.500v-3h3M11.500 1.500h3v3M14.500 11.500v3h-3M4.500 14.500h-3v-3" stroke="#d0d0d0" stroke-width="1" fill="none"/></svg>
<span class="t" style="left:1665.00px;top:411.19px;font-size:11px;line-height:11px;color:#e0e0e0;">fish_rig</span>
<svg style="left:1712px;top:412px;" width="6" height="8" viewBox="0 0 6 8"><path d="M1.500 1l3 3-3 3z" fill="#4a4a4a"/></svg>
<svg style="left:1732.5px;top:408px;" width="16" height="16" viewBox="0 0 16 16"><circle cx="9.500" cy="2.800" r="1.700" fill="#e6e6e6"/><path d="M2 3.500l4.500 2.500h6.500M8.500 6l-1 4.500-4.500 4.500M7.700 10l5.500 4.200" stroke="#e6e6e6" stroke-width="1.3" fill="none" stroke-linecap="round"/></svg>
<span class="t" style="letter-spacing:0.219px;left:1755.20px;top:411.19px;font-size:11px;line-height:11px;color:#e0e0e0;">Armature</span>
<svg style="left:1894px;top:408px;" width="16" height="16" viewBox="0 0 16 16"><path d="M9.500 2l4.500 4.500-1.200.5-2.300 2.300-.3 3-2.200-2.200-4.500 4.500 4.500-4.500-2.300-2.300 3-.3 2.300-2.300z" fill="none" stroke="#9a9a9a" stroke-width="1.100"/></svg>
<div style="left:1591px;top:436.5px;width:26px;height:28.0px;background:#2b2b2b;border-radius:4px 0 0 4px;"></div>
<div style="left:1591px;top:472.5px;width:26px;height:140.0px;background:#2b2b2b;border-radius:4px 0 0 4px;"></div>
<div style="left:1591px;top:620.7px;width:26px;height:168.29999999999995px;background:#2b2b2b;border-radius:4px 0 0 4px;"></div>
<div style="left:1591px;top:796.8px;width:26px;height:28.0px;background:#2b2b2b;border-radius:4px 0 0 4px;"></div>
<div style="left:1591px;top:499.6px;width:26px;height:1.8px;background:#232323;"></div>
<div style="left:1591px;top:527.6px;width:26px;height:1.8px;background:#232323;"></div>
<div style="left:1591px;top:555.6px;width:26px;height:1.8px;background:#232323;"></div>
<div style="left:1591px;top:583.6px;width:26px;height:1.8px;background:#232323;"></div>
<div style="left:1591px;top:647.85px;width:26px;height:1.8px;background:#232323;"></div>
<div style="left:1591px;top:675.9000000000001px;width:26px;height:1.8px;background:#232323;"></div>
<div style="left:1591px;top:703.95px;width:26px;height:1.8px;background:#232323;"></div>
<div style="left:1591px;top:732.0px;width:26px;height:1.8px;background:#232323;"></div>
<div style="left:1591px;top:760.0500000000001px;width:26px;height:1.8px;background:#232323;"></div>
<div style="left:1591px;top:704.7px;width:26.5px;height:28px;background:#424242;border-radius:4px 0 0 4px;"></div>
<svg style="left:1595.5px;top:442.5px;" width="16" height="16" viewBox="0 0 16 16"><path d="M4 1.500v6M2.500 9.500a1.600 2.200 0 0 0 3.200 0v-1.500h-3.200zM9 2a3 3 0 0 0 1.800 5v7.200a1.200 1.200 0 0 0 2.400 0V7a3 3 0 0 0 1.600-5v3h-3.800z" fill="#e0e0e0" stroke="#e0e0e0" stroke-width=".600"/></svg>
<svg style="left:1595.5px;top:478.6px;" width="16" height="16" viewBox="0 0 16 16"><rect x="1.500" y="4.500" width="13" height="9.500" rx="1" fill="none" stroke="#e0e0e0" stroke-width="1.300"/><path d="M4 4.500v-2.500h5v2.500M11.500 7.500h1.500M11.500 10.500h1.500M3.500 7.500h6M3.500 10.500h6" stroke="#e0e0e0" stroke-width="1.200" fill="none"/><circle cx="12.500" cy="2.500" r=".900" fill="#e0e0e0"/></svg>
<svg style="left:1595.5px;top:506.5px;" width="16" height="16" viewBox="0 0 16 16"><path d="M1.500 6.500v-3.500a1.500 1.500 0 0 1 1.500-1.500h10a1.500 1.500 0 0 1 1.500 1.500v3.500h-2.500v-1.500h-8v1.500z" fill="#e0e0e0"/><rect x="4.500" y="7" width="7" height="7.500" fill="none" stroke="#e0e0e0" stroke-width="1.200"/><path d="M5.500 13.500l2.500-4 2.500 4z" fill="#e0e0e0"/></svg>
<svg style="left:1595.5px;top:534.6px;" width="16" height="16" viewBox="0 0 16 16"><rect x="5" y="1.500" width="10" height="10" fill="none" stroke="#e0e0e0" stroke-width="1.100"/><path d="M6 10.500l3-5 2 3 1.500-1.500 2 3.500z" fill="#e0e0e0"/><circle cx="12.500" cy="4" r="1" fill="#e0e0e0"/><path d="M3 4v9.500h9.500M1 6.500v9h9.500" stroke="#e0e0e0" stroke-width="1" fill="none"/></svg>
<svg style="left:1595.5px;top:563px;" width="16" height="16" viewBox="0 0 16 16"><path d="M5 2l3.500 8.500h-7z" fill="#e0e0e0"/><circle cx="12.500" cy="3.500" r="1.800" fill="#e0e0e0"/><circle cx="11" cy="11" r="3.300" fill="none" stroke="#e0e0e0" stroke-width="1.200"/><circle cx="11" cy="11" r="1" fill="#e0e0e0"/></svg>
<svg style="left:1595.5px;top:590.8px;" width="16" height="16" viewBox="0 0 16 16"><circle cx="8" cy="8" r="6.300" fill="none" stroke="#e0566a" stroke-width="1.400"/><path d="M4 5c2-1 3 1 2.500 2.500s1 2 2 3-1 3.500-2.500 3M10.500 2.500c-1 1.500 0 2.500 1.500 3s2 2.500 1 4" stroke="#e0566a" stroke-width="1.400" fill="none"/></svg>
<svg style="left:1595.5px;top:626.7px;" width="16" height="16" viewBox="0 0 16 16"><rect x="4" y="4" width="8" height="8" fill="#e19a58"/><path d="M1.500 4.500v-3h3M11.500 1.500h3v3M14.500 11.500v3h-3M4.500 14.500h-3v-3" stroke="#e19a58" stroke-width="1" fill="none"/></svg>
<svg style="left:1595.5px;top:655px;" width="16" height="16" viewBox="0 0 16 16"><path d="M13 12a6.300 6.300 0 1 1 0-8" fill="none" stroke="#5b8fd8" stroke-width="1.300"/><circle cx="7.500" cy="8" r="2.600" fill="#5b8fd8"/><circle cx="13.500" cy="3" r="1.700" fill="#5b8fd8"/></svg>
<svg style="left:1595.5px;top:682.8px;" width="16" height="16" viewBox="0 0 16 16"><path d="M2 10.500a4.500 4.500 0 0 1 4-4.500l5-3.500a2.800 2.800 0 0 1 3 4l-3.500 5a4.500 4.500 0 0 1-8.500-1z" fill="none" stroke="#5b8fd8" stroke-width="1.300"/><circle cx="6.500" cy="10.500" r="2.200" fill="none" stroke="#5b8fd8" stroke-width="1.300"/><circle cx="12" cy="4.500" r="1" fill="#5b8fd8"/></svg>
<svg style="left:1595.5px;top:710.7px;" width="16" height="16" viewBox="0 0 16 16"><circle cx="9.500" cy="2.800" r="1.700" fill="#2fc79a"/><path d="M2 3.500l4.500 2.500h6.500M8.500 6l-1 4.500-4.500 4.500M7.700 10l5.500 4.200" stroke="#2fc79a" stroke-width="1.4" fill="none" stroke-linecap="round"/></svg>
<svg style="left:1595.5px;top:739px;" width="16" height="16" viewBox="0 0 16 16"><path d="M3 2.500a1.800 1.800 0 0 1 3 1.500l5.500 5.500a1.800 1.800 0 1 1 1 3 1.800 1.800 0 1 1-3-1l-5.500-5.500a1.800 1.800 0 1 1-1-3z" fill="#2fc79a"/></svg>
<svg style="left:1595.5px;top:767px;" width="16" height="16" viewBox="0 0 16 16"><path d="M3.500 5a1.500 1.500 0 0 1 2.500 1l4 4a1.500 1.500 0 1 1 .800 2.500 1.500 1.500 0 1 1-2.500-.800l-4-4a1.500 1.500 0 1 1-.800-2.700z" fill="none" stroke="#5b8fd8" stroke-width="1.200"/><path d="M1.500 3l3-1.500M13 4.500a5 5 0 0 1 0 5.500M7 2.500a5 5 0 0 1 5-.500" stroke="#5b8fd8" stroke-width="1.200" fill="none"/></svg>
<svg style="left:1595.5px;top:802.8px;" width="16" height="16" viewBox="0 0 16 16"><rect x="1.500" y="1.500" width="13" height="13" fill="none" stroke="#e0566a" stroke-width="1.200"/><path d="M2 2h3v3h-3zM8 2h3v3h-3zM5 5h3v3h-3zM11 5h3v3h-3zM2 8h3v3h-3zM8 8h3v3h-3zM5 11h3v3h-3zM11 11h3v3h-3z" fill="#e0566a"/></svg>
<div style="left:1626px;top:438px;width:30px;height:18px;background:#2c2c2c;border-radius:4px 0 0 4px;box-shadow:inset 0 0 0 1px #3a3a3a;"></div>
<svg style="left:1628px;top:439px;" width="16" height="16" viewBox="0 0 16 16"><circle cx="9.500" cy="2.800" r="1.700" fill="#e6e6e6"/><path d="M2 3.500l4.500 2.500h6.500M8.500 6l-1 4.500-4.500 4.500M7.700 10l5.500 4.200" stroke="#e6e6e6" stroke-width="1.3" fill="none" stroke-linecap="round"/></svg>
<svg style="left:1645.5px;top:445px;" width="8" height="6" viewBox="0 0 8 6"><path d="M0.8 1l3.2 3.2L7.2 1" stroke="#c8c8c8" stroke-width="1.500" fill="none"/></svg>
<div style="left:1656.5px;top:438px;width:234.5px;height:18px;background:#1d1d1d;"></div>
<span class="t" style="letter-spacing:0.219px;left:1663.00px;top:441.69px;font-size:11px;line-height:11px;color:#e6e6e6;">Armature</span>
<div style="left:1891.5px;top:438px;width:19.5px;height:18px;background:#585858;border-radius:0 4px 4px 0;"></div>
<svg style="left:1893.5px;top:439px;" width="16" height="16" viewBox="0 0 16 16"><path d="M8 1.800c2 1.300 3.500 1.500 5.500 1.500 0 5-1 8.500-5.500 11-4.500-2.500-5.500-6-5.500-11 2 0 3.500-.200 5.500-1.500z" fill="none" stroke="#9a9a9a" stroke-width="1.200"/></svg>
<div style="left:1617px;top:489px;width:301.5px;height:151px;background:#383838;"></div>
<div style="left:1617px;top:736px;width:301.5px;height:82.5px;background:#383838;"></div>
<svg style="left:1625px;top:473.6px;" width="8" height="8" viewBox="0 0 8 8"><path d="M0.800 1.500h6.400l-3.200 5z" fill="#a0a0a0"/></svg>
<span class="t" style="letter-spacing:0.404px;left:1639.00px;top:471.87px;font-size:11.5px;line-height:11.5px;color:#e0e0e0;">Skeleton</span>
<svg style="left:1900.5px;top:475.1px;" width="12" height="5" viewBox="0 0 12 5"><rect x="0" y="0" width="1.300" height="1.300" fill="#8a8a8a"/><rect x="0" y="3" width="1.300" height="1.300" fill="#8a8a8a"/><rect x="3" y="0" width="1.300" height="1.300" fill="#8a8a8a"/><rect x="3" y="3" width="1.300" height="1.300" fill="#8a8a8a"/><rect x="6" y="0" width="1.300" height="1.300" fill="#8a8a8a"/><rect x="6" y="3" width="1.300" height="1.300" fill="#8a8a8a"/><rect x="9" y="0" width="1.300" height="1.300" fill="#8a8a8a"/><rect x="9" y="3" width="1.300" height="1.300" fill="#8a8a8a"/></svg>
<div style="left:1626px;top:498.2px;width:141px;height:18px;background:#5680c2;border-radius:4px 0 0 4px;"></div>
<span class="t" style="letter-spacing:-0.097px;left:1663.50px;top:501.69px;font-size:11px;line-height:11px;color:#fff;">Pose Position</span>
<div style="left:1767.7px;top:498.2px;width:143.3px;height:18px;background:#585858;border-radius:0 4px 4px 0;"></div>
<span class="t" style="letter-spacing:0.014px;left:1806.80px;top:501.69px;font-size:11px;line-height:11px;color:#e6e6e6;">Rest Position</span>
<span class="t" style="letter-spacing:-0.011px;left:1632.40px;top:526.69px;font-size:11px;line-height:11px;color:#e0e0e0;">Layers:</span>
<span class="t" style="letter-spacing:0.046px;left:1632.40px;top:582.69px;font-size:11px;line-height:11px;color:#e0e0e0;">Protected Layers:</span>
<div style="left:1626px;top:547.3px;width:135.79999999999995px;height:27.7px;background:#585858;border-radius:4px;"></div>
<div style="left:1626px;top:560.9px;width:135.79999999999995px;height:0.8px;background:#3c3c3c;"></div>
<div style="left:1641.4499999999998px;top:547.3px;width:0.8px;height:27.7px;background:#3c3c3c;"></div>
<div style="left:1658.8px;top:547.3px;width:0.8px;height:27.7px;background:#3c3c3c;"></div>
<div style="left:1676.1499999999999px;top:547.3px;width:0.8px;height:27.7px;background:#3c3c3c;"></div>
<div style="left:1693.5px;top:547.3px;width:0.8px;height:27.7px;background:#3c3c3c;"></div>
<div style="left:1710.85px;top:547.3px;width:0.8px;height:27.7px;background:#3c3c3c;"></div>
<div style="left:1728.1999999999998px;top:547.3px;width:0.8px;height:27.7px;background:#3c3c3c;"></div>
<div style="left:1745.55px;top:547.3px;width:0.8px;height:27.7px;background:#3c3c3c;"></div>
<div style="left:1774px;top:547.3px;width:137px;height:27.7px;background:#585858;border-radius:4px;"></div>
<div style="left:1774px;top:560.9px;width:137px;height:0.8px;background:#3c3c3c;"></div>
<div style="left:1789.6px;top:547.3px;width:0.8px;height:27.7px;background:#3c3c3c;"></div>
<div style="left:1807.1px;top:547.3px;width:0.8px;height:27.7px;background:#3c3c3c;"></div>
<div style="left:1824.6px;top:547.3px;width:0.8px;height:27.7px;background:#3c3c3c;"></div>
<div style="left:1842.1px;top:547.3px;width:0.8px;height:27.7px;background:#3c3c3c;"></div>
<div style="left:1859.6px;top:547.3px;width:0.8px;height:27.7px;background:#3c3c3c;"></div>
<div style="left:1877.1px;top:547.3px;width:0.8px;height:27.7px;background:#3c3c3c;"></div>
<div style="left:1894.6px;top:547.3px;width:0.8px;height:27.7px;background:#3c3c3c;"></div>
<div style="left:1626px;top:547.3px;width:15.449999999999994px;height:13.6px;background:#5680c2;border-radius:4px 0 0 0;"></div>
<div style="left:1631px;top:551.3px;width:5.5px;height:5.5px;background:#fff;border-radius:3px;"></div>
<div style="left:1626px;top:603.3px;width:135.79999999999995px;height:27.7px;background:#585858;border-radius:4px;"></div>
<div style="left:1626px;top:616.9px;width:135.79999999999995px;height:0.8px;background:#3c3c3c;"></div>
<div style="left:1641.4499999999998px;top:603.3px;width:0.8px;height:27.7px;background:#3c3c3c;"></div>
<div style="left:1658.8px;top:603.3px;width:0.8px;height:27.7px;background:#3c3c3c;"></div>
<div style="left:1676.1499999999999px;top:603.3px;width:0.8px;height:27.7px;background:#3c3c3c;"></div>
<div style="left:1693.5px;top:603.3px;width:0.8px;height:27.7px;background:#3c3c3c;"></div>
<div style="left:1710.85px;top:603.3px;width:0.8px;height:27.7px;background:#3c3c3c;"></div>
<div style="left:1728.1999999999998px;top:603.3px;width:0.8px;height:27.7px;background:#3c3c3c;"></div>
<div style="left:1745.55px;top:603.3px;width:0.8px;height:27.7px;background:#3c3c3c;"></div>
<div style="left:1774px;top:603.3px;width:137px;height:27.7px;background:#585858;border-radius:4px;"></div>
<div style="left:1774px;top:616.9px;width:137px;height:0.8px;background:#3c3c3c;"></div>
<div style="left:1789.6px;top:603.3px;width:0.8px;height:27.7px;background:#3c3c3c;"></div>
<div style="left:1807.1px;top:603.3px;width:0.8px;height:27.7px;background:#3c3c3c;"></div>
<div style="left:1824.6px;top:603.3px;width:0.8px;height:27.7px;background:#3c3c3c;"></div>
<div style="left:1842.1px;top:603.3px;width:0.8px;height:27.7px;background:#3c3c3c;"></div>
<div style="left:1859.6px;top:603.3px;width:0.8px;height:27.7px;background:#3c3c3c;"></div>
<div style="left:1877.1px;top:603.3px;width:0.8px;height:27.7px;background:#3c3c3c;"></div>
<div style="left:1894.6px;top:603.3px;width:0.8px;height:27.7px;background:#3c3c3c;"></div>
<div style="left:1631px;top:607.3px;width:5.5px;height:5.5px;background:#e0e0e0;border-radius:3px;"></div>
<svg style="left:1625px;top:648.3px;" width="8" height="8" viewBox="0 0 8 8"><path d="M1.500 0.800v6.400l5-3.200z" fill="#a0a0a0"/></svg>
<span class="t" style="letter-spacing:0.385px;left:1639.00px;top:646.57px;font-size:11.5px;line-height:11.5px;color:#e0e0e0;">Bone Groups</span>
<svg style="left:1900.5px;top:649.8px;" width="12" height="5" viewBox="0 0 12 5"><rect x="0" y="0" width="1.300" height="1.300" fill="#8a8a8a"/><rect x="0" y="3" width="1.300" height="1.300" fill="#8a8a8a"/><rect x="3" y="0" width="1.300" height="1.300" fill="#8a8a8a"/><rect x="3" y="3" width="1.300" height="1.300" fill="#8a8a8a"/><rect x="6" y="0" width="1.300" height="1.300" fill="#8a8a8a"/><rect x="6" y="3" width="1.300" height="1.300" fill="#8a8a8a"/><rect x="9" y="0" width="1.300" height="1.300" fill="#8a8a8a"/><rect x="9" y="3" width="1.300" height="1.300" fill="#8a8a8a"/></svg>
<svg style="left:1625px;top:672.7px;" width="8" height="8" viewBox="0 0 8 8"><path d="M1.500 0.800v6.400l5-3.200z" fill="#a0a0a0"/></svg>
<span class="t" style="letter-spacing:0.203px;left:1639.00px;top:670.97px;font-size:11.5px;line-height:11.5px;color:#e0e0e0;">Pose Library</span>
<svg style="left:1900.5px;top:674.2px;" width="12" height="5" viewBox="0 0 12 5"><rect x="0" y="0" width="1.300" height="1.300" fill="#8a8a8a"/><rect x="0" y="3" width="1.300" height="1.300" fill="#8a8a8a"/><rect x="3" y="0" width="1.300" height="1.300" fill="#8a8a8a"/><rect x="3" y="3" width="1.300" height="1.300" fill="#8a8a8a"/><rect x="6" y="0" width="1.300" height="1.300" fill="#8a8a8a"/><rect x="6" y="3" width="1.300" height="1.300" fill="#8a8a8a"/><rect x="9" y="0" width="1.300" height="1.300" fill="#8a8a8a"/><rect x="9" y="3" width="1.300" height="1.300" fill="#8a8a8a"/></svg>
<svg style="left:1625px;top:696.8px;" width="8" height="8" viewBox="0 0 8 8"><path d="M1.500 0.800v6.400l5-3.200z" fill="#a0a0a0"/></svg>
<span class="t" style="letter-spacing:0.406px;left:1639.00px;top:695.07px;font-size:11.5px;line-height:11.5px;color:#e0e0e0;">Motion Paths</span>
<svg style="left:1900.5px;top:698.3px;" width="12" height="5" viewBox="0 0 12 5"><rect x="0" y="0" width="1.300" height="1.300" fill="#8a8a8a"/><rect x="0" y="3" width="1.300" height="1.300" fill="#8a8a8a"/><rect x="3" y="0" width="1.300" height="1.300" fill="#8a8a8a"/><rect x="3" y="3" width="1.300" height="1.300" fill="#8a8a8a"/><rect x="6" y="0" width="1.300" height="1.300" fill="#8a8a8a"/><rect x="6" y="3" width="1.300" height="1.300" fill="#8a8a8a"/><rect x="9" y="0" width="1.300" height="1.300" fill="#8a8a8a"/><rect x="9" y="3" width="1.300" height="1.300" fill="#8a8a8a"/></svg>
<svg style="left:1625px;top:720.6px;" width="8" height="8" viewBox="0 0 8 8"><path d="M0.800 1.500h6.400l-3.200 5z" fill="#a0a0a0"/></svg>
<span class="t" style="letter-spacing:0.535px;left:1639.00px;top:718.87px;font-size:11.5px;line-height:11.5px;color:#e0e0e0;">Viewport Display</span>
<svg style="left:1900.5px;top:722.1px;" width="12" height="5" viewBox="0 0 12 5"><rect x="0" y="0" width="1.300" height="1.300" fill="#8a8a8a"/><rect x="0" y="3" width="1.300" height="1.300" fill="#8a8a8a"/><rect x="3" y="0" width="1.300" height="1.300" fill="#8a8a8a"/><rect x="3" y="3" width="1.300" height="1.300" fill="#8a8a8a"/><rect x="6" y="0" width="1.300" height="1.300" fill="#8a8a8a"/><rect x="6" y="3" width="1.300" height="1.300" fill="#8a8a8a"/><rect x="9" y="0" width="1.300" height="1.300" fill="#8a8a8a"/><rect x="9" y="3" width="1.300" height="1.300" fill="#8a8a8a"/></svg>
<div style="left:1617px;top:640.5px;width:301.5px;height:1px;background:#3e3e3e;"></div>
<div style="left:1617px;top:664.5px;width:301.5px;height:1px;background:#3e3e3e;"></div>
<div style="left:1617px;top:688.8px;width:301.5px;height:1px;background:#3e3e3e;"></div>
<div style="left:1617px;top:712.8px;width:301.5px;height:1px;background:#3e3e3e;"></div>
<div style="left:1617px;top:819px;width:301.5px;height:1px;background:#3e3e3e;"></div>
<div style="left:1617px;top:843.3px;width:301.5px;height:1px;background:#3e3e3e;"></div>
<div style="left:1617px;top:867.5px;width:301.5px;height:1px;background:#3e3e3e;"></div>
<span class="t" style="letter-spacing:0.064px;left:1698.00px;top:748.69px;font-size:11px;line-height:11px;color:#e0e0e0;">Display As</span>
<div style="left:1758.7px;top:745px;width:132.5px;height:18.3px;background:#2c2c2c;border-radius:4px;box-shadow:inset 0 0 0 1px #3a3a3a;"></div>
<span class="t" style="letter-spacing:0.019px;left:1765.40px;top:748.69px;font-size:11px;line-height:11px;color:#e0e0e0;">Octahedral</span>
<svg style="left:1881px;top:751.5px;" width="8" height="6" viewBox="0 0 8 6"><path d="M0.8 1l3.2 3.2L7.2 1" stroke="#c8c8c8" stroke-width="1.500" fill="none"/></svg>
<div style="left:1900.0px;top:752.2px;width:3.6px;height:3.6px;background:#d0d0d0;border-radius:2px;"></div>
<span class="t" style="letter-spacing:0.164px;left:1630.30px;top:774.19px;font-size:11px;line-height:11px;color:#e0e0e0;">Name</span>
<div style="left:1669px;top:773.3px;width:12.2px;height:12.2px;background:#666;border-radius:3px;"></div>
<div style="left:1693.2px;top:777.6px;width:3.6px;height:3.6px;background:#d0d0d0;border-radius:2px;"></div>
<span class="t" style="letter-spacing:-0.352px;left:1734.20px;top:774.19px;font-size:11px;line-height:11px;color:#e0e0e0;">Shapes</span>
<div style="left:1778px;top:773.3px;width:12.2px;height:12.2px;background:#5680c2;border-radius:3px;"></div>
<svg style="left:1778px;top:773.3px;" width="12" height="12" viewBox="0 0 12 12"><path d="M2.500 6l2.600 2.800 4.500-5.500" stroke="#fff" stroke-width="1.600" fill="none"/></svg>
<div style="left:1802.0px;top:777.6px;width:3.6px;height:3.6px;background:#d0d0d0;border-radius:2px;"></div>
<span class="t" style="letter-spacing:0.012px;left:1828.90px;top:774.19px;font-size:11px;line-height:11px;color:#e0e0e0;">In Front</span>
<div style="left:1876px;top:773.3px;width:12.2px;height:12.2px;background:#5680c2;border-radius:3px;"></div>
<svg style="left:1876px;top:773.3px;" width="12" height="12" viewBox="0 0 12 12"><path d="M2.500 6l2.600 2.800 4.500-5.500" stroke="#fff" stroke-width="1.600" fill="none"/></svg>
<div style="left:1900.0px;top:777.6px;width:3.6px;height:3.6px;background:#d0d0d0;border-radius:2px;"></div>
<span class="t" style="letter-spacing:-0.117px;left:1636.30px;top:795.69px;font-size:11px;line-height:11px;color:#e0e0e0;">Axes</span>
<div style="left:1669px;top:795px;width:12.2px;height:12.2px;background:#666;border-radius:3px;"></div>
<div style="left:1693.2px;top:799.2px;width:3.6px;height:3.6px;background:#d0d0d0;border-radius:2px;"></div>
<span class="t" style="letter-spacing:-0.076px;left:1722.40px;top:795.69px;font-size:11px;line-height:11px;color:#e0e0e0;">Group C..</span>
<div style="left:1778px;top:795px;width:12.2px;height:12.2px;background:#5680c2;border-radius:3px;"></div>
<svg style="left:1778px;top:795px;" width="12" height="12" viewBox="0 0 12 12"><path d="M2.500 6l2.600 2.800 4.500-5.500" stroke="#fff" stroke-width="1.600" fill="none"/></svg>
<div style="left:1802.0px;top:799.2px;width:3.6px;height:3.6px;background:#d0d0d0;border-radius:2px;"></div>
<svg style="left:1625px;top:827.3px;" width="8" height="8" viewBox="0 0 8 8"><path d="M1.500 0.800v6.400l5-3.200z" fill="#a0a0a0"/></svg>
<span class="t" style="letter-spacing:0.436px;left:1639.00px;top:825.57px;font-size:11.5px;line-height:11.5px;color:#e0e0e0;">Inverse Kinematics</span>
<svg style="left:1900.5px;top:828.8px;" width="12" height="5" viewBox="0 0 12 5"><rect x="0" y="0" width="1.300" height="1.300" fill="#8a8a8a"/><rect x="0" y="3" width="1.300" height="1.300" fill="#8a8a8a"/><rect x="3" y="0" width="1.300" height="1.300" fill="#8a8a8a"/><rect x="3" y="3" width="1.300" height="1.300" fill="#8a8a8a"/><rect x="6" y="0" width="1.300" height="1.300" fill="#8a8a8a"/><rect x="6" y="3" width="1.300" height="1.300" fill="#8a8a8a"/><rect x="9" y="0" width="1.300" height="1.300" fill="#8a8a8a"/><rect x="9" y="3" width="1.300" height="1.300" fill="#8a8a8a"/></svg>
<svg style="left:1625px;top:851.4px;" width="8" height="8" viewBox="0 0 8 8"><path d="M1.500 0.800v6.400l5-3.200z" fill="#a0a0a0"/></svg>
<span class="t" style="letter-spacing:0.398px;left:1639.00px;top:849.67px;font-size:11.5px;line-height:11.5px;color:#e0e0e0;">Custom Properties</span>
<svg style="left:1900.5px;top:852.9px;" width="12" height="5" viewBox="0 0 12 5"><rect x="0" y="0" width="1.300" height="1.300" fill="#8a8a8a"/><rect x="0" y="3" width="1.300" height="1.300" fill="#8a8a8a"/><rect x="3" y="0" width="1.300" height="1.300" fill="#8a8a8a"/><rect x="3" y="3" width="1.300" height="1.300" fill="#8a8a8a"/><rect x="6" y="0" width="1.300" height="1.300" fill="#8a8a8a"/><rect x="6" y="3" width="1.300" height="1.300" fill="#8a8a8a"/><rect x="9" y="0" width="1.300" height="1.300" fill="#8a8a8a"/><rect x="9" y="3" width="1.300" height="1.300" fill="#8a8a8a"/></svg></body></html>
